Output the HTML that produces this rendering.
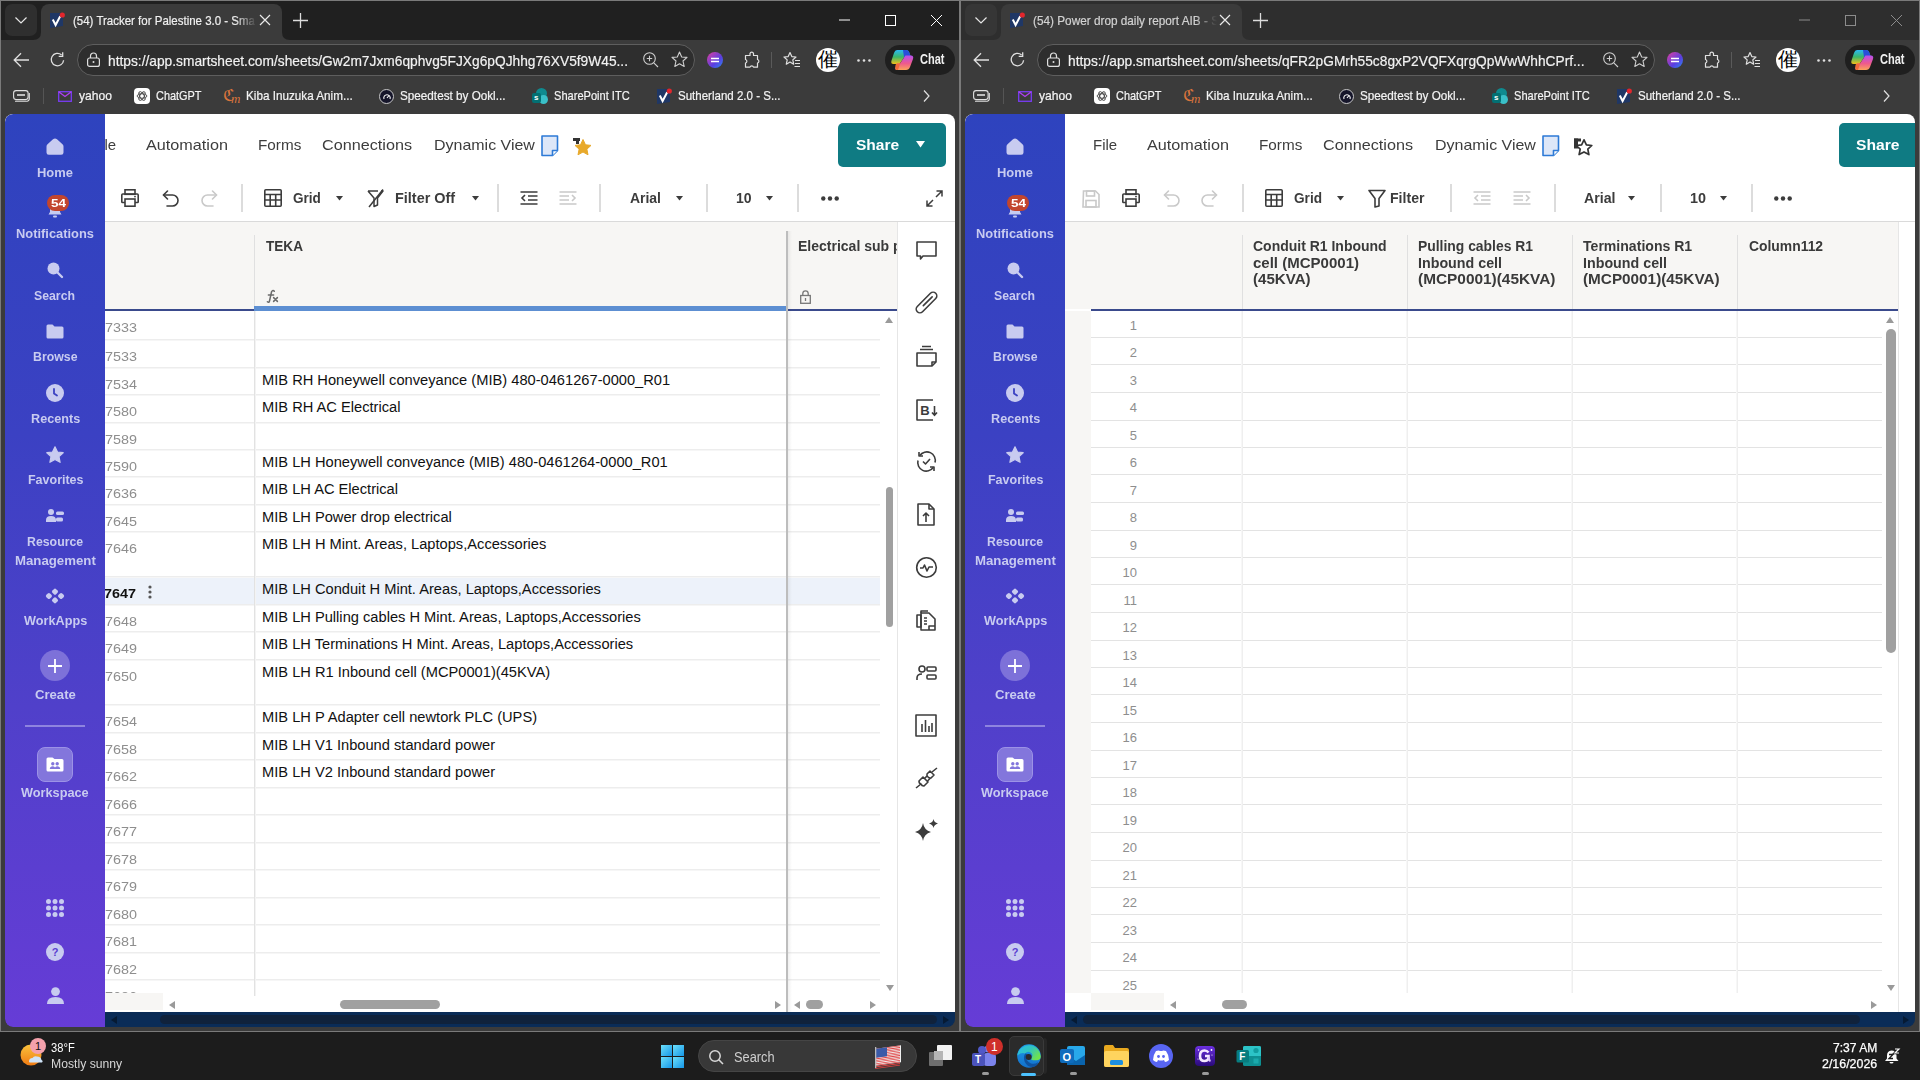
<!DOCTYPE html><html><head><meta charset="utf-8"><title>s</title><style>
*{box-sizing:border-box;margin:0;padding:0}
html,body{width:1920px;height:1080px;overflow:hidden;background:#1c1c1c;font-family:"Liberation Sans",sans-serif}
.abs{position:absolute}
.t{position:absolute;white-space:nowrap;line-height:1;transform-origin:0 0}
svg{position:absolute;overflow:visible}
.clip{position:absolute;overflow:hidden}
</style></head><body>
<div class="abs" style="left:0px;top:0px;width:1920px;height:1032px;background:#7a7a7a;"></div>
<div class="abs" style="left:1px;top:1px;width:958px;height:1030px;background:#3b3b3b;"></div>
<div class="abs" style="left:1px;top:1px;width:958px;height:39px;background:#202020;"></div>
<div class="abs" style="left:5px;top:4px;width:32px;height:32px;background:#2f2f2f;border-radius:7px"></div>
<svg style="left:15px;top:17px" width="12" height="7" viewBox="0 0 12 7"><path d="M0.5 0.5 L6 6 L11.5 0.5" fill="none" stroke="#e8e8e8" stroke-width="1.2"/></svg>
<div class="abs" style="left:41px;top:4px;width:241px;height:36px;background:#3b3b3b;border-radius:8px 8px 0 0"></div>
<svg style="left:33px;top:32px" width="8" height="8" viewBox="0 0 8 8"><path d="M0 8 Q8 8 8 0 L8 8Z" fill="#3b3b3b"/></svg>
<svg style="left:282px;top:32px" width="8" height="8" viewBox="0 0 8 8"><path d="M8 8 Q0 8 0 0 L0 8Z" fill="#3b3b3b"/></svg>
<svg style="left:50px;top:12px" width="15" height="17" viewBox="0 0 15 17"><path d="M0 1H13V14L0 16Z" fill="#1f3766"/><path d="M2.8 7.5L5.6 13L10.2 4.2" fill="none" stroke="#fff" stroke-width="2"/><circle cx="12.3" cy="3" r="2.6" fill="#e3262c"/></svg>
<div class="clip" style="left:73px;top:8px;width:184px;height:24px;-webkit-mask-image:linear-gradient(90deg,#000 88%,transparent 100%)">
<div class="t" style="left:0px;top:6.00px;font-size:13px;color:#f0f0f0;font-weight:normal;font-family:'Liberation Sans',sans-serif;font-style:normal;transform:scaleX(0.8838);-webkit-text-stroke:0.2px #f0f0f0;">(54) Tracker for Palestine 3.0 - Sma</div>
</div>
<svg style="left:260px;top:15px" width="10" height="10" viewBox="0 0 10 10"><path d="M0 0L10 10M10 0L0 10" stroke="#e8e8e8" stroke-width="1.2"/></svg>
<svg style="left:293px;top:13px" width="15" height="15" viewBox="0 0 15 15"><path d="M7.5 0V15M0 7.5H15" stroke="#dcdcdc" stroke-width="1.3"/></svg>
<svg style="left:839px;top:19px" width="11" height="2" viewBox="0 0 11 2"><path d="M0 1H11" stroke="#ffffff" stroke-width="1"/></svg>
<svg style="left:885px;top:15px" width="11" height="11" viewBox="0 0 11 11"><rect x="0.5" y="0.5" width="10" height="10" fill="none" stroke="#ffffff" stroke-width="1"/></svg>
<svg style="left:931px;top:15px" width="11" height="11" viewBox="0 0 11 11"><path d="M0 0L11 11M11 0L0 11" stroke="#ffffff" stroke-width="1"/></svg>
<svg style="left:13px;top:52px" width="17" height="16" viewBox="0 0 17 16"><path d="M16 8H1.2M8 1.2L1.2 8L8 14.8" fill="none" stroke="#e0e0e0" stroke-width="1.3"/></svg>
<svg style="left:50px;top:52px" width="15" height="15" viewBox="0 0 15 15"><path d="M13.6 8.2A6.2 6.2 0 1 1 11.6 3" fill="none" stroke="#e0e0e0" stroke-width="1.3"/><path d="M12.7 0.3V4.3H8.7" fill="none" stroke="#e0e0e0" stroke-width="1.3"/></svg>
<div class="abs" style="left:77px;top:44px;width:618px;height:32px;background:#2e2e2e;border-radius:16px;border:1px solid #5e5e5e"></div>
<svg style="left:87px;top:52px" width="13" height="15" viewBox="0 0 13 15"><rect x="0.6" y="6" width="11.8" height="8.4" rx="2" fill="none" stroke="#e0e0e0" stroke-width="1.2"/><path d="M3.5 6V4A3 3 0 0 1 9.5 4V6" fill="none" stroke="#e0e0e0" stroke-width="1.2"/><circle cx="6.5" cy="10" r="1" fill="#e0e0e0"/></svg>
<div class="t" style="left:108px;top:52.80px;font-size:15px;color:#f2f2f2;font-weight:normal;font-family:'Liberation Sans',sans-serif;font-style:normal;transform:scaleX(0.9172);-webkit-text-stroke:0.2px #f2f2f2;">https://app.smartsheet.com/sheets/Gw2m7Jxm6qphvg5FJXg6pQJhhg76XV5f9W45...</div>
<svg style="left:643px;top:52px" width="16" height="16" viewBox="0 0 16 16"><circle cx="6.5" cy="6.5" r="5.8" fill="none" stroke="#cfcfcf" stroke-width="1.1"/><path d="M10.8 10.8L15 15M6.5 3.8V9.2M3.8 6.5H9.2" stroke="#cfcfcf" stroke-width="1.1"/></svg>
<svg style="left:671px;top:51px" width="17" height="17" viewBox="0 0 17 17"><path d="M8.5 1L10.7 6L16 6.4L12 10L13.2 15.5L8.5 12.7L3.8 15.5L5 10L1 6.4L6.3 6Z" fill="none" stroke="#cfcfcf" stroke-width="1.1" stroke-linejoin="round"/></svg>
<div class="abs" style="left:707px;top:52px;width:16px;height:16px;background:linear-gradient(135deg,#e040a0,#5a3ee0 60%,#2a8af0);border-radius:50%"></div>
<svg style="left:710px;top:56px" width="10" height="8" viewBox="0 0 10 8"><path d="M1 2.5H9M1 5.5H9" stroke="#fff" stroke-width="1.5"/></svg>
<svg style="left:744px;top:52px" width="16" height="17" viewBox="0 0 16 17"><path d="M6 1.5A1.8 1.8 0 0 1 9.5 1.5V3.5H13.5V7.5A1.8 1.8 0 0 1 13.5 11V15.2H9.5A1.8 1.8 0 0 0 6 15.2H1.5V11A1.8 1.8 0 0 0 1.5 7.5V3.5H6Z" fill="none" stroke="#e0e0e0" stroke-width="1.2" stroke-linejoin="round"/></svg>
<div class="abs" style="left:771px;top:52px;width:1px;height:16px;background:#5a5a5a;"></div>
<svg style="left:783px;top:51px" width="18" height="17" viewBox="0 0 18 17"><path d="M7 1.5L8.8 5.6L13 6L9.8 8.9L10.7 13.2L7 11L3.3 13.2L4.2 8.9L1 6L5.2 5.6Z" fill="none" stroke="#e0e0e0" stroke-width="1.2" stroke-linejoin="round"/><path d="M12 9.5H17M12 12.5H17M11.5 15.5H17" stroke="#e0e0e0" stroke-width="1.2"/></svg>
<div class="abs" style="left:816px;top:48px;width:24px;height:24px;background:#fff;border-radius:50%"></div>
<div class="t" style="left:818px;top:49.18px;font-size:20px;color:#000;font-weight:normal;font-family:'Liberation Serif',serif;font-style:normal;">催</div>
<svg style="left:857px;top:59px" width="14" height="3" viewBox="0 0 14 3"><circle cx="1.5" cy="1.5" r="1.3" fill="#e0e0e0"/><circle cx="7" cy="1.5" r="1.3" fill="#e0e0e0"/><circle cx="12.5" cy="1.5" r="1.3" fill="#e0e0e0"/></svg>
<div class="abs" style="left:885px;top:45px;width:70px;height:30px;background:#1f1f1f;border-radius:15px"></div>
<svg style="left:889px;top:48px" width="26" height="24" viewBox="0 0 26 24"><defs><linearGradient id="ca0" x1="0" y1="0" x2="0" y2="1"><stop offset="0" stop-color="#2ab8f5"/><stop offset="0.5" stop-color="#3bb56a"/><stop offset="1" stop-color="#f2c21b"/></linearGradient><linearGradient id="cb0" x1="0" y1="0" x2="0" y2="1"><stop offset="0" stop-color="#b84ff0"/><stop offset="0.55" stop-color="#ee5a8c"/><stop offset="1" stop-color="#fba35a"/></linearGradient></defs><path d="M8 2H17Q19.5 2 20.5 5L22 9.5H15L10.5 16H4.5Q1.5 16 2.5 12.5L5 5Q6 2 8 2Z" fill="url(#ca0)"/><path d="M14 2H17Q19.5 2 20.5 5L22 9.5H15Z" fill="#2a4fd8"/><path d="M16.5 7.5H22Q25 7.5 24 11L21 19Q20 22 17 22H8Q5.5 22 6.5 19L8 15.5H11Z" fill="url(#cb0)"/><path d="M6.5 19Q6 16 8 15.5H11L9 22H8Q6 22 6.5 19Z" fill="#f06a3a"/></svg>
<div class="t" style="left:920px;top:52.15px;font-size:14px;color:#f0f0f0;font-weight:bold;font-family:'Liberation Sans',sans-serif;font-style:normal;transform:scaleX(0.7871);">Chat</div>
<svg style="left:13px;top:90px" width="17" height="12" viewBox="0 0 17 12"><rect x="0.6" y="0.6" width="14.5" height="9" rx="2.5" fill="none" stroke="#e0e0e0" stroke-width="1.1"/><path d="M2 11.2H14A2.5 2.5 0 0 0 16.3 8.5V3" fill="none" stroke="#e0e0e0" stroke-width="1.1"/><path d="M4 5H12" stroke="#e0e0e0" stroke-width="1.6"/></svg>
<div class="abs" style="left:43px;top:88px;width:1px;height:16px;background:#555;"></div>
<svg style="left:58px;top:91px" width="14" height="11" viewBox="0 0 14 11"><rect x="0.7" y="0.7" width="12.6" height="9.6" fill="none" stroke="#7a3cf5" stroke-width="1.3"/><path d="M0.7 0.7L7 5.5L13.3 0.7" fill="none" stroke="#b040f0" stroke-width="1.3"/></svg>
<div class="t" style="left:79px;top:89.00px;font-size:13px;color:#f4f4f4;font-weight:normal;font-family:'Liberation Sans',sans-serif;font-style:normal;transform:scaleX(0.9316);-webkit-text-stroke:0.2px #f4f4f4;">yahoo</div>
<div class="abs" style="left:134px;top:88px;width:16px;height:16px;background:#fff;border-radius:4px"></div>
<svg style="left:136px;top:90px" width="12" height="12" viewBox="0 0 12 12"><g fill="none" stroke="#444" stroke-width="0.9"><ellipse cx="6" cy="6" rx="4.8" ry="2.2"/><ellipse cx="6" cy="6" rx="4.8" ry="2.2" transform="rotate(60 6 6)"/><ellipse cx="6" cy="6" rx="4.8" ry="2.2" transform="rotate(120 6 6)"/></g></svg>
<div class="t" style="left:156px;top:89.00px;font-size:13px;color:#f4f4f4;font-weight:normal;font-family:'Liberation Sans',sans-serif;font-style:normal;transform:scaleX(0.8397);-webkit-text-stroke:0.2px #f4f4f4;">ChatGPT</div>
<div class="t" style="left:223px;top:86.85px;font-size:17px;color:#d9743c;font-weight:normal;font-family:'Liberation Serif',serif;font-style:normal;">ℭ</div>
<div class="t" style="left:231px;top:92.42px;font-size:13px;color:#d9743c;font-weight:normal;font-family:'Liberation Serif',serif;font-style:italic;">m</div>
<div class="t" style="left:246px;top:89.00px;font-size:13px;color:#f4f4f4;font-weight:normal;font-family:'Liberation Sans',sans-serif;font-style:normal;transform:scaleX(0.9003);-webkit-text-stroke:0.2px #f4f4f4;">Kiba Inuzuka Anim...</div>
<div class="abs" style="left:379px;top:89px;width:15px;height:15px;background:#15152a;border-radius:50%;border:1px solid #c8c8c8"></div>
<svg style="left:383px;top:93px" width="8" height="7" viewBox="0 0 8 7"><path d="M1 6A3.2 3.2 0 1 1 7 6" fill="none" stroke="#fff" stroke-width="1.1"/><path d="M4 5L6 2.5" stroke="#fff" stroke-width="1.1"/></svg>
<div class="t" style="left:400px;top:89.00px;font-size:13px;color:#f4f4f4;font-weight:normal;font-family:'Liberation Sans',sans-serif;font-style:normal;transform:scaleX(0.9011);-webkit-text-stroke:0.2px #f4f4f4;">Speedtest by Ookl...</div>
<div class="abs" style="left:536px;top:88px;width:11px;height:11px;background:#0f8a8f;border-radius:50%"></div>
<div class="abs" style="left:539px;top:95px;width:9px;height:9px;background:#3ac0c8;border-radius:50%"></div>
<div class="abs" style="left:532px;top:93px;width:9px;height:10px;background:#037073;border-radius:2px"></div>
<div class="t" style="left:534px;top:94.23px;font-size:8px;color:#fff;font-weight:bold;font-family:'Liberation Sans',sans-serif;font-style:normal;">s</div>
<div class="t" style="left:554px;top:89.00px;font-size:13px;color:#f4f4f4;font-weight:normal;font-family:'Liberation Sans',sans-serif;font-style:normal;transform:scaleX(0.8518);-webkit-text-stroke:0.2px #f4f4f4;">SharePoint ITC</div>
<svg style="left:657px;top:88px" width="15" height="17" viewBox="0 0 15 17"><path d="M0 1H13V14L0 16Z" fill="#1f3766"/><path d="M2.8 7.5L5.6 13L10.2 4.2" fill="none" stroke="#fff" stroke-width="2"/><circle cx="12.3" cy="3" r="2.6" fill="#e3262c"/></svg>
<div class="t" style="left:678px;top:89.00px;font-size:13px;color:#f4f4f4;font-weight:normal;font-family:'Liberation Sans',sans-serif;font-style:normal;transform:scaleX(0.8865);-webkit-text-stroke:0.2px #f4f4f4;">Sutherland 2.0 - S...</div>
<svg style="left:923px;top:90px" width="7" height="12" viewBox="0 0 7 12"><path d="M1 0.5L6 6L1 11.5" fill="none" stroke="#e0e0e0" stroke-width="1.2"/></svg>
<div class="abs" style="left:961px;top:1px;width:958px;height:1030px;background:#3b3b3b;"></div>
<div class="abs" style="left:961px;top:1px;width:958px;height:39px;background:#2e2e2e;"></div>
<div class="abs" style="left:965px;top:4px;width:32px;height:32px;background:#363636;border-radius:7px"></div>
<svg style="left:975px;top:17px" width="12" height="7" viewBox="0 0 12 7"><path d="M0.5 0.5 L6 6 L11.5 0.5" fill="none" stroke="#e8e8e8" stroke-width="1.2"/></svg>
<div class="abs" style="left:1001px;top:4px;width:241px;height:36px;background:#3b3b3b;border-radius:8px 8px 0 0"></div>
<svg style="left:993px;top:32px" width="8" height="8" viewBox="0 0 8 8"><path d="M0 8 Q8 8 8 0 L8 8Z" fill="#3b3b3b"/></svg>
<svg style="left:1242px;top:32px" width="8" height="8" viewBox="0 0 8 8"><path d="M8 8 Q0 8 0 0 L0 8Z" fill="#3b3b3b"/></svg>
<svg style="left:1010px;top:12px" width="15" height="17" viewBox="0 0 15 17"><path d="M0 1H13V14L0 16Z" fill="#1f3766"/><path d="M2.8 7.5L5.6 13L10.2 4.2" fill="none" stroke="#fff" stroke-width="2"/><circle cx="12.3" cy="3" r="2.6" fill="#e3262c"/></svg>
<div class="clip" style="left:1033px;top:8px;width:184px;height:24px;-webkit-mask-image:linear-gradient(90deg,#000 88%,transparent 100%)">
<div class="t" style="left:0px;top:6.00px;font-size:13px;color:#d2d2d2;font-weight:normal;font-family:'Liberation Sans',sans-serif;font-style:normal;transform:scaleX(0.9064);-webkit-text-stroke:0.2px #d2d2d2;">(54) Power drop daily report AIB - S</div>
</div>
<svg style="left:1220px;top:15px" width="10" height="10" viewBox="0 0 10 10"><path d="M0 0L10 10M10 0L0 10" stroke="#e8e8e8" stroke-width="1.2"/></svg>
<svg style="left:1253px;top:13px" width="15" height="15" viewBox="0 0 15 15"><path d="M7.5 0V15M0 7.5H15" stroke="#dcdcdc" stroke-width="1.3"/></svg>
<svg style="left:1799px;top:19px" width="11" height="2" viewBox="0 0 11 2"><path d="M0 1H11" stroke="#8c8c8c" stroke-width="1"/></svg>
<svg style="left:1845px;top:15px" width="11" height="11" viewBox="0 0 11 11"><rect x="0.5" y="0.5" width="10" height="10" fill="none" stroke="#8c8c8c" stroke-width="1"/></svg>
<svg style="left:1891px;top:15px" width="11" height="11" viewBox="0 0 11 11"><path d="M0 0L11 11M11 0L0 11" stroke="#8c8c8c" stroke-width="1"/></svg>
<svg style="left:973px;top:52px" width="17" height="16" viewBox="0 0 17 16"><path d="M16 8H1.2M8 1.2L1.2 8L8 14.8" fill="none" stroke="#e0e0e0" stroke-width="1.3"/></svg>
<svg style="left:1010px;top:52px" width="15" height="15" viewBox="0 0 15 15"><path d="M13.6 8.2A6.2 6.2 0 1 1 11.6 3" fill="none" stroke="#e0e0e0" stroke-width="1.3"/><path d="M12.7 0.3V4.3H8.7" fill="none" stroke="#e0e0e0" stroke-width="1.3"/></svg>
<div class="abs" style="left:1037px;top:44px;width:618px;height:32px;background:#2e2e2e;border-radius:16px;border:1px solid #5e5e5e"></div>
<svg style="left:1047px;top:52px" width="13" height="15" viewBox="0 0 13 15"><rect x="0.6" y="6" width="11.8" height="8.4" rx="2" fill="none" stroke="#e0e0e0" stroke-width="1.2"/><path d="M3.5 6V4A3 3 0 0 1 9.5 4V6" fill="none" stroke="#e0e0e0" stroke-width="1.2"/><circle cx="6.5" cy="10" r="1" fill="#e0e0e0"/></svg>
<div class="t" style="left:1068px;top:52.80px;font-size:15px;color:#f2f2f2;font-weight:normal;font-family:'Liberation Sans',sans-serif;font-style:normal;transform:scaleX(0.9165);-webkit-text-stroke:0.2px #f2f2f2;">https://app.smartsheet.com/sheets/qFR2pGMrh55c8gxP2VQFXqrgQpWwWhhCPrf...</div>
<svg style="left:1603px;top:52px" width="16" height="16" viewBox="0 0 16 16"><circle cx="6.5" cy="6.5" r="5.8" fill="none" stroke="#cfcfcf" stroke-width="1.1"/><path d="M10.8 10.8L15 15M6.5 3.8V9.2M3.8 6.5H9.2" stroke="#cfcfcf" stroke-width="1.1"/></svg>
<svg style="left:1631px;top:51px" width="17" height="17" viewBox="0 0 17 17"><path d="M8.5 1L10.7 6L16 6.4L12 10L13.2 15.5L8.5 12.7L3.8 15.5L5 10L1 6.4L6.3 6Z" fill="none" stroke="#cfcfcf" stroke-width="1.1" stroke-linejoin="round"/></svg>
<div class="abs" style="left:1667px;top:52px;width:16px;height:16px;background:linear-gradient(135deg,#e040a0,#5a3ee0 60%,#2a8af0);border-radius:50%"></div>
<svg style="left:1670px;top:56px" width="10" height="8" viewBox="0 0 10 8"><path d="M1 2.5H9M1 5.5H9" stroke="#fff" stroke-width="1.5"/></svg>
<svg style="left:1704px;top:52px" width="16" height="17" viewBox="0 0 16 17"><path d="M6 1.5A1.8 1.8 0 0 1 9.5 1.5V3.5H13.5V7.5A1.8 1.8 0 0 1 13.5 11V15.2H9.5A1.8 1.8 0 0 0 6 15.2H1.5V11A1.8 1.8 0 0 0 1.5 7.5V3.5H6Z" fill="none" stroke="#e0e0e0" stroke-width="1.2" stroke-linejoin="round"/></svg>
<div class="abs" style="left:1731px;top:52px;width:1px;height:16px;background:#5a5a5a;"></div>
<svg style="left:1743px;top:51px" width="18" height="17" viewBox="0 0 18 17"><path d="M7 1.5L8.8 5.6L13 6L9.8 8.9L10.7 13.2L7 11L3.3 13.2L4.2 8.9L1 6L5.2 5.6Z" fill="none" stroke="#e0e0e0" stroke-width="1.2" stroke-linejoin="round"/><path d="M12 9.5H17M12 12.5H17M11.5 15.5H17" stroke="#e0e0e0" stroke-width="1.2"/></svg>
<div class="abs" style="left:1776px;top:48px;width:24px;height:24px;background:#fff;border-radius:50%"></div>
<div class="t" style="left:1778px;top:49.18px;font-size:20px;color:#000;font-weight:normal;font-family:'Liberation Serif',serif;font-style:normal;">催</div>
<svg style="left:1817px;top:59px" width="14" height="3" viewBox="0 0 14 3"><circle cx="1.5" cy="1.5" r="1.3" fill="#e0e0e0"/><circle cx="7" cy="1.5" r="1.3" fill="#e0e0e0"/><circle cx="12.5" cy="1.5" r="1.3" fill="#e0e0e0"/></svg>
<div class="abs" style="left:1845px;top:45px;width:70px;height:30px;background:#1f1f1f;border-radius:15px"></div>
<svg style="left:1849px;top:48px" width="26" height="24" viewBox="0 0 26 24"><defs><linearGradient id="ca960" x1="0" y1="0" x2="0" y2="1"><stop offset="0" stop-color="#2ab8f5"/><stop offset="0.5" stop-color="#3bb56a"/><stop offset="1" stop-color="#f2c21b"/></linearGradient><linearGradient id="cb960" x1="0" y1="0" x2="0" y2="1"><stop offset="0" stop-color="#b84ff0"/><stop offset="0.55" stop-color="#ee5a8c"/><stop offset="1" stop-color="#fba35a"/></linearGradient></defs><path d="M8 2H17Q19.5 2 20.5 5L22 9.5H15L10.5 16H4.5Q1.5 16 2.5 12.5L5 5Q6 2 8 2Z" fill="url(#ca960)"/><path d="M14 2H17Q19.5 2 20.5 5L22 9.5H15Z" fill="#2a4fd8"/><path d="M16.5 7.5H22Q25 7.5 24 11L21 19Q20 22 17 22H8Q5.5 22 6.5 19L8 15.5H11Z" fill="url(#cb960)"/><path d="M6.5 19Q6 16 8 15.5H11L9 22H8Q6 22 6.5 19Z" fill="#f06a3a"/></svg>
<div class="t" style="left:1880px;top:52.15px;font-size:14px;color:#f0f0f0;font-weight:bold;font-family:'Liberation Sans',sans-serif;font-style:normal;transform:scaleX(0.7871);">Chat</div>
<svg style="left:973px;top:90px" width="17" height="12" viewBox="0 0 17 12"><rect x="0.6" y="0.6" width="14.5" height="9" rx="2.5" fill="none" stroke="#e0e0e0" stroke-width="1.1"/><path d="M2 11.2H14A2.5 2.5 0 0 0 16.3 8.5V3" fill="none" stroke="#e0e0e0" stroke-width="1.1"/><path d="M4 5H12" stroke="#e0e0e0" stroke-width="1.6"/></svg>
<div class="abs" style="left:1003px;top:88px;width:1px;height:16px;background:#555;"></div>
<svg style="left:1018px;top:91px" width="14" height="11" viewBox="0 0 14 11"><rect x="0.7" y="0.7" width="12.6" height="9.6" fill="none" stroke="#7a3cf5" stroke-width="1.3"/><path d="M0.7 0.7L7 5.5L13.3 0.7" fill="none" stroke="#b040f0" stroke-width="1.3"/></svg>
<div class="t" style="left:1039px;top:89.00px;font-size:13px;color:#f4f4f4;font-weight:normal;font-family:'Liberation Sans',sans-serif;font-style:normal;transform:scaleX(0.9316);-webkit-text-stroke:0.2px #f4f4f4;">yahoo</div>
<div class="abs" style="left:1094px;top:88px;width:16px;height:16px;background:#fff;border-radius:4px"></div>
<svg style="left:1096px;top:90px" width="12" height="12" viewBox="0 0 12 12"><g fill="none" stroke="#444" stroke-width="0.9"><ellipse cx="6" cy="6" rx="4.8" ry="2.2"/><ellipse cx="6" cy="6" rx="4.8" ry="2.2" transform="rotate(60 6 6)"/><ellipse cx="6" cy="6" rx="4.8" ry="2.2" transform="rotate(120 6 6)"/></g></svg>
<div class="t" style="left:1116px;top:89.00px;font-size:13px;color:#f4f4f4;font-weight:normal;font-family:'Liberation Sans',sans-serif;font-style:normal;transform:scaleX(0.8397);-webkit-text-stroke:0.2px #f4f4f4;">ChatGPT</div>
<div class="t" style="left:1183px;top:86.85px;font-size:17px;color:#d9743c;font-weight:normal;font-family:'Liberation Serif',serif;font-style:normal;">ℭ</div>
<div class="t" style="left:1191px;top:92.42px;font-size:13px;color:#d9743c;font-weight:normal;font-family:'Liberation Serif',serif;font-style:italic;">m</div>
<div class="t" style="left:1206px;top:89.00px;font-size:13px;color:#f4f4f4;font-weight:normal;font-family:'Liberation Sans',sans-serif;font-style:normal;transform:scaleX(0.9003);-webkit-text-stroke:0.2px #f4f4f4;">Kiba Inuzuka Anim...</div>
<div class="abs" style="left:1339px;top:89px;width:15px;height:15px;background:#15152a;border-radius:50%;border:1px solid #c8c8c8"></div>
<svg style="left:1343px;top:93px" width="8" height="7" viewBox="0 0 8 7"><path d="M1 6A3.2 3.2 0 1 1 7 6" fill="none" stroke="#fff" stroke-width="1.1"/><path d="M4 5L6 2.5" stroke="#fff" stroke-width="1.1"/></svg>
<div class="t" style="left:1360px;top:89.00px;font-size:13px;color:#f4f4f4;font-weight:normal;font-family:'Liberation Sans',sans-serif;font-style:normal;transform:scaleX(0.9011);-webkit-text-stroke:0.2px #f4f4f4;">Speedtest by Ookl...</div>
<div class="abs" style="left:1496px;top:88px;width:11px;height:11px;background:#0f8a8f;border-radius:50%"></div>
<div class="abs" style="left:1499px;top:95px;width:9px;height:9px;background:#3ac0c8;border-radius:50%"></div>
<div class="abs" style="left:1492px;top:93px;width:9px;height:10px;background:#037073;border-radius:2px"></div>
<div class="t" style="left:1494px;top:94.23px;font-size:8px;color:#fff;font-weight:bold;font-family:'Liberation Sans',sans-serif;font-style:normal;">s</div>
<div class="t" style="left:1514px;top:89.00px;font-size:13px;color:#f4f4f4;font-weight:normal;font-family:'Liberation Sans',sans-serif;font-style:normal;transform:scaleX(0.8518);-webkit-text-stroke:0.2px #f4f4f4;">SharePoint ITC</div>
<svg style="left:1617px;top:88px" width="15" height="17" viewBox="0 0 15 17"><path d="M0 1H13V14L0 16Z" fill="#1f3766"/><path d="M2.8 7.5L5.6 13L10.2 4.2" fill="none" stroke="#fff" stroke-width="2"/><circle cx="12.3" cy="3" r="2.6" fill="#e3262c"/></svg>
<div class="t" style="left:1638px;top:89.00px;font-size:13px;color:#f4f4f4;font-weight:normal;font-family:'Liberation Sans',sans-serif;font-style:normal;transform:scaleX(0.8865);-webkit-text-stroke:0.2px #f4f4f4;">Sutherland 2.0 - S...</div>
<svg style="left:1883px;top:90px" width="7" height="12" viewBox="0 0 7 12"><path d="M1 0.5L6 6L1 11.5" fill="none" stroke="#e0e0e0" stroke-width="1.2"/></svg>
<div class="clip" style="left:0;top:0;width:1920px;height:1080px;clip-path:inset(114px 965px 53px 5px round 8px)">
<div class="abs" style="left:5px;top:114px;width:950px;height:107px;background:#ffffff;"></div>
<div class="abs" style="left:5px;top:221px;width:950px;height:1px;background:#dadada;"></div>
<div class="t" style="left:92.09999999999991px;top:137.10px;font-size:15px;color:#3d3d3d;font-weight:normal;font-family:'Liberation Sans',sans-serif;font-style:normal;transform:scaleX(0.9970);">File</div>
<div class="t" style="left:146px;top:137.10px;font-size:15px;color:#3d3d3d;font-weight:normal;font-family:'Liberation Sans',sans-serif;font-style:normal;transform:scaleX(1.0805);">Automation</div>
<div class="t" style="left:257.70000000000005px;top:137.10px;font-size:15px;color:#3d3d3d;font-weight:normal;font-family:'Liberation Sans',sans-serif;font-style:normal;transform:scaleX(1.0188);">Forms</div>
<div class="t" style="left:322px;top:137.10px;font-size:15px;color:#3d3d3d;font-weight:normal;font-family:'Liberation Sans',sans-serif;font-style:normal;transform:scaleX(1.0793);">Connections</div>
<div class="t" style="left:433.79999999999995px;top:137.10px;font-size:15px;color:#3d3d3d;font-weight:normal;font-family:'Liberation Sans',sans-serif;font-style:normal;transform:scaleX(1.0647);">Dynamic View</div>
<svg style="left:540.8px;top:135px" width="18" height="22" viewBox="0 0 18 22"><path d="M1 1H16.5V15.5L11.5 20.5H1Z" fill="#dde7f8" stroke="#2d7ad6" stroke-width="1.6" stroke-linejoin="round"/><path d="M16.5 15.5H11.5V20.5" fill="#fff" stroke="#2d7ad6" stroke-width="1.6" stroke-linejoin="round"/></svg>
<svg style="left:573px;top:138px" width="19" height="18" viewBox="0 0 19 18"><path d="M10 1.5L12.5 6.8L18 7.4L13.9 11.2L15 16.8L10 14L5 16.8L6.1 11.2L2 7.4L7.5 6.8Z" fill="#e8a92b" stroke="#e8a92b" stroke-width="1" stroke-linejoin="round"/><rect x="0" y="0" width="7" height="3" fill="#333"/><rect x="3" y="0" width="3" height="6" fill="#333"/></svg>
<div class="abs" style="left:838px;top:123px;width:108px;height:44px;background:#0f7b83;border-radius:5px"></div>
<div class="t" style="left:855.5px;top:137.30px;font-size:15px;color:#fff;font-weight:bold;font-family:'Liberation Sans',sans-serif;font-style:normal;transform:scaleX(1.0359);">Share</div>
<svg style="left:916px;top:141px" width="9" height="7" viewBox="0 0 9 7"><path d="M0 0H9L4.5 6.5Z" fill="#fff"/></svg>
<svg style="left:121px;top:189px" width="18" height="18" viewBox="0 0 18 18"><g fill="none" stroke="#3c3c3c" stroke-width="1.6"><rect x="4" y="0.8" width="10" height="4.5"/><path d="M4 13.5H1.5Q0.8 13.5 0.8 12.8V6Q0.8 5 1.8 5H16.2Q17.2 5 17.2 6V12.8Q17.2 13.5 16.5 13.5H14"/><rect x="4" y="10" width="10" height="7.2"/></g><circle cx="14" cy="7.6" r="0.9" fill="#3c3c3c"/></svg>
<svg style="left:162px;top:189px" width="17" height="18" viewBox="0 0 17 18"><g fill="none" stroke="#3c3c3c" stroke-width="1.6" stroke-linecap="round"><path d="M2 6H10.5A5.5 5.5 0 0 1 10.5 17H5"/><path d="M5.5 2L1.5 6L5.5 10"/></g></svg>
<svg style="left:200.5px;top:189px" width="17" height="18" viewBox="0 0 17 18"><g fill="none" stroke="#c9c9c9" stroke-width="1.6" stroke-linecap="round"><path d="M15 6H6.5A5.5 5.5 0 0 0 6.5 17H12"/><path d="M11.5 2L15.5 6L11.5 10"/></g></svg>
<div class="abs" style="left:240.5px;top:184px;width:2px;height:28px;background:#dcdcdc;"></div>
<svg style="left:264px;top:189px" width="18" height="18" viewBox="0 0 18 18"><g fill="none" stroke="#3c3c3c" stroke-width="1.6"><rect x="0.8" y="0.8" width="16.4" height="16.4" rx="1"/><path d="M0.8 5.5H17.2M0.8 11H17.2M6.2 5.5V17.2M11.7 5.5V17.2"/></g></svg>
<div class="t" style="left:293.4px;top:190.30px;font-size:15px;color:#3c3c3c;font-weight:bold;font-family:'Liberation Sans',sans-serif;font-style:normal;transform:scaleX(0.9046);">Grid</div>
<svg style="left:335.5px;top:195.5px" width="7" height="5" viewBox="0 0 7 5"><path d="M0 0H7L3.5 4.6Z" fill="#3c3c3c"/></svg>
<svg style="left:366.5px;top:189px" width="17" height="19" viewBox="0 0 17 19"><g fill="none" stroke="#3c3c3c" stroke-width="1.5" stroke-linejoin="round"><path d="M1 2H11M14 2H16L10.5 9V16L7 17.5V9L1 2"/><path d="M16 0.5L2 18"/></g></svg>
<div class="t" style="left:394.5px;top:190.30px;font-size:15px;color:#3c3c3c;font-weight:bold;font-family:'Liberation Sans',sans-serif;font-style:normal;transform:scaleX(0.9616);">Filter Off</div>
<svg style="left:471.5px;top:195.5px" width="7" height="5" viewBox="0 0 7 5"><path d="M0 0H7L3.5 4.6Z" fill="#3c3c3c"/></svg>
<div class="abs" style="left:496.5px;top:184px;width:2px;height:28px;background:#dcdcdc;"></div>
<svg style="left:520px;top:190.5px" width="18" height="14" viewBox="0 0 18 14"><g fill="none" stroke="#3c3c3c" stroke-width="1.6"><path d="M0.5 1H17.5M0.5 13H17.5M8 5H17.5M8 9H17.5"/><path d="M5 4L2 7L5 10"/></g></svg>
<svg style="left:559px;top:190.5px" width="18" height="14" viewBox="0 0 18 14"><g fill="none" stroke="#c9c9c9" stroke-width="1.6"><path d="M0.5 1H17.5M0.5 13H17.5M0.5 5H10M0.5 9H10"/><path d="M13 4L16 7L13 10"/></g></svg>
<div class="abs" style="left:599px;top:184px;width:2px;height:28px;background:#dcdcdc;"></div>
<div class="t" style="left:630px;top:190.30px;font-size:15px;color:#3c3c3c;font-weight:bold;font-family:'Liberation Sans',sans-serif;font-style:normal;transform:scaleX(0.9293);">Arial</div>
<svg style="left:675.5px;top:195.5px" width="7" height="5" viewBox="0 0 7 5"><path d="M0 0H7L3.5 4.6Z" fill="#3c3c3c"/></svg>
<div class="abs" style="left:706px;top:184px;width:2px;height:28px;background:#dcdcdc;"></div>
<div class="t" style="left:736.4px;top:190.30px;font-size:15px;color:#3c3c3c;font-weight:bold;font-family:'Liberation Sans',sans-serif;font-style:normal;transform:scaleX(0.9348);">10</div>
<svg style="left:766.3px;top:195.5px" width="7" height="5" viewBox="0 0 7 5"><path d="M0 0H7L3.5 4.6Z" fill="#3c3c3c"/></svg>
<div class="abs" style="left:797px;top:184px;width:2px;height:28px;background:#dcdcdc;"></div>
<svg style="left:821px;top:195.5px" width="18" height="5" viewBox="0 0 18 5"><circle cx="2.3" cy="2.5" r="2.2" fill="#3c3c3c"/><circle cx="9" cy="2.5" r="2.2" fill="#3c3c3c"/><circle cx="15.7" cy="2.5" r="2.2" fill="#3c3c3c"/></svg>
<svg style="left:925.5px;top:189.5px" width="17" height="17" viewBox="0 0 17 17"><g fill="none" stroke="#3c3c3c" stroke-width="1.5"><path d="M10.5 1H16V6.5M16 1L10 7M6.5 16H1V10.5M1 16L7 10"/></g></svg>
<div class="abs" style="left:105px;top:222px;width:792px;height:790px;background:#fff;"></div>
<div class="abs" style="left:105px;top:222px;width:792px;height:87px;background:#f7f6f4;"></div>
<div class="abs" style="left:254px;top:235px;width:1px;height:74px;background:#e0e0e0;"></div>
<div class="t" style="left:265.5px;top:239.35px;font-size:14px;color:#3a3a3a;font-weight:bold;font-family:'Liberation Sans',sans-serif;font-style:normal;transform:scaleX(0.9705);">TEKA</div>
<svg style="left:266px;top:289px" width="13" height="15" viewBox="0 0 13 15"><g fill="none" stroke="#6a6a6a" stroke-width="1.5" stroke-linecap="round"><path d="M8.3 2.3Q7 0.6 5.6 2.6L3.5 12Q3 14.2 1.4 12.8"/><path d="M2.4 6H7.6"/><path d="M7.6 8.6L11.4 12.4M11.4 8.6L7.6 12.4"/></g></svg>
<div class="t" style="left:798px;top:239.35px;font-size:14px;color:#3a3a3a;font-weight:bold;font-family:'Liberation Sans',sans-serif;font-style:normal;transform:scaleX(1.0002);">Electrical sub p</div>
<div class="abs" style="left:897px;top:222px;width:58px;height:790px;background:#fff;"></div>
<svg style="left:800px;top:289.5px" width="11" height="14" viewBox="0 0 11 14"><rect x="0.7" y="5.5" width="9.6" height="7.8" fill="none" stroke="#777" stroke-width="1.3"/><path d="M2.8 5.5V3.5A2.7 2.7 0 0 1 8.2 3.5V5.5" fill="none" stroke="#777" stroke-width="1.3"/><path d="M5.5 8V11" stroke="#777" stroke-width="1.3"/></svg>
<div class="abs" style="left:105px;top:309px;width:149px;height:2px;background:#3a4a8c;"></div>
<div class="abs" style="left:254px;top:306px;width:532px;height:5px;background:#5d8fd2;"></div>
<div class="abs" style="left:788px;top:309px;width:109px;height:2px;background:#3a4a8c;"></div>
<div class="abs" style="left:105px;top:577px;width:775px;height:27px;background:#edf2fa;"></div>
<div class="abs" style="left:105px;top:339px;width:775px;height:1px;background:#ededed;"></div>
<div class="abs" style="left:105px;top:340px;width:775px;height:1px;background:#f6f6f6;"></div>
<div class="t" style="left:104.5px;top:320.70px;font-size:13px;color:#8e8e8e;font-weight:normal;font-family:'Liberation Sans',sans-serif;font-style:normal;transform:scaleX(1.1064);">7333</div>
<div class="abs" style="left:105px;top:367px;width:775px;height:1px;background:#ededed;"></div>
<div class="abs" style="left:105px;top:368px;width:775px;height:1px;background:#f6f6f6;"></div>
<div class="t" style="left:104.5px;top:349.70px;font-size:13px;color:#8e8e8e;font-weight:normal;font-family:'Liberation Sans',sans-serif;font-style:normal;transform:scaleX(1.1064);">7533</div>
<div class="abs" style="left:105px;top:394px;width:775px;height:1px;background:#ededed;"></div>
<div class="abs" style="left:105px;top:395px;width:775px;height:1px;background:#f6f6f6;"></div>
<div class="t" style="left:104.5px;top:377.70px;font-size:13px;color:#8e8e8e;font-weight:normal;font-family:'Liberation Sans',sans-serif;font-style:normal;transform:scaleX(1.1064);">7534</div>
<div class="t" style="left:262px;top:373.28px;font-size:14.67px;color:#111;font-weight:normal;font-family:'Liberation Sans',sans-serif;font-style:normal;">MIB RH Honeywell conveyance (MIB) 480-0461267-0000_R01</div>
<div class="abs" style="left:105px;top:422px;width:775px;height:1px;background:#ededed;"></div>
<div class="abs" style="left:105px;top:423px;width:775px;height:1px;background:#f6f6f6;"></div>
<div class="t" style="left:104.5px;top:404.70px;font-size:13px;color:#8e8e8e;font-weight:normal;font-family:'Liberation Sans',sans-serif;font-style:normal;transform:scaleX(1.1064);">7580</div>
<div class="t" style="left:262px;top:400.28px;font-size:14.67px;color:#111;font-weight:normal;font-family:'Liberation Sans',sans-serif;font-style:normal;">MIB RH AC Electrical</div>
<div class="abs" style="left:105px;top:449px;width:775px;height:1px;background:#ededed;"></div>
<div class="abs" style="left:105px;top:450px;width:775px;height:1px;background:#f6f6f6;"></div>
<div class="t" style="left:104.5px;top:432.70px;font-size:13px;color:#8e8e8e;font-weight:normal;font-family:'Liberation Sans',sans-serif;font-style:normal;transform:scaleX(1.1064);">7589</div>
<div class="abs" style="left:105px;top:476px;width:775px;height:1px;background:#ededed;"></div>
<div class="abs" style="left:105px;top:477px;width:775px;height:1px;background:#f6f6f6;"></div>
<div class="t" style="left:104.5px;top:459.70px;font-size:13px;color:#8e8e8e;font-weight:normal;font-family:'Liberation Sans',sans-serif;font-style:normal;transform:scaleX(1.1064);">7590</div>
<div class="t" style="left:262px;top:455.28px;font-size:14.67px;color:#111;font-weight:normal;font-family:'Liberation Sans',sans-serif;font-style:normal;">MIB LH Honeywell conveyance (MIB) 480-0461264-0000_R01</div>
<div class="abs" style="left:105px;top:504px;width:775px;height:1px;background:#ededed;"></div>
<div class="abs" style="left:105px;top:505px;width:775px;height:1px;background:#f6f6f6;"></div>
<div class="t" style="left:104.5px;top:486.70px;font-size:13px;color:#8e8e8e;font-weight:normal;font-family:'Liberation Sans',sans-serif;font-style:normal;transform:scaleX(1.1064);">7636</div>
<div class="t" style="left:262px;top:482.28px;font-size:14.67px;color:#111;font-weight:normal;font-family:'Liberation Sans',sans-serif;font-style:normal;">MIB LH AC Electrical</div>
<div class="abs" style="left:105px;top:531px;width:775px;height:1px;background:#ededed;"></div>
<div class="abs" style="left:105px;top:532px;width:775px;height:1px;background:#f6f6f6;"></div>
<div class="t" style="left:104.5px;top:514.70px;font-size:13px;color:#8e8e8e;font-weight:normal;font-family:'Liberation Sans',sans-serif;font-style:normal;transform:scaleX(1.1064);">7645</div>
<div class="t" style="left:262px;top:510.28px;font-size:14.67px;color:#111;font-weight:normal;font-family:'Liberation Sans',sans-serif;font-style:normal;">MIB LH Power drop electrical</div>
<div class="abs" style="left:105px;top:576px;width:775px;height:1px;background:#ededed;"></div>
<div class="abs" style="left:105px;top:577px;width:775px;height:1px;background:#f6f6f6;"></div>
<div class="t" style="left:104.5px;top:541.70px;font-size:13px;color:#8e8e8e;font-weight:normal;font-family:'Liberation Sans',sans-serif;font-style:normal;transform:scaleX(1.1064);">7646</div>
<div class="t" style="left:262px;top:537.28px;font-size:14.67px;color:#111;font-weight:normal;font-family:'Liberation Sans',sans-serif;font-style:normal;">MIB LH H Mint. Areas, Laptops,Accessories</div>
<div class="abs" style="left:105px;top:604px;width:775px;height:1px;background:#ededed;"></div>
<div class="abs" style="left:105px;top:605px;width:775px;height:1px;background:#f6f6f6;"></div>
<div class="t" style="left:104px;top:586.70px;font-size:13px;color:#111;font-weight:bold;font-family:'Liberation Sans',sans-serif;font-style:normal;transform:scaleX(1.1064);">7647</div>
<svg style="left:148px;top:585px" width="4" height="15" viewBox="0 0 4 15"><circle cx="2" cy="2" r="1.6" fill="#555"/><circle cx="2" cy="7" r="1.6" fill="#555"/><circle cx="2" cy="12" r="1.6" fill="#555"/></svg>
<div class="t" style="left:262px;top:582.28px;font-size:14.67px;color:#111;font-weight:normal;font-family:'Liberation Sans',sans-serif;font-style:normal;">MIB LH Conduit H Mint. Areas, Laptops,Accessories</div>
<div class="abs" style="left:105px;top:631px;width:775px;height:1px;background:#ededed;"></div>
<div class="abs" style="left:105px;top:632px;width:775px;height:1px;background:#f6f6f6;"></div>
<div class="t" style="left:104.5px;top:614.70px;font-size:13px;color:#8e8e8e;font-weight:normal;font-family:'Liberation Sans',sans-serif;font-style:normal;transform:scaleX(1.1064);">7648</div>
<div class="t" style="left:262px;top:610.28px;font-size:14.67px;color:#111;font-weight:normal;font-family:'Liberation Sans',sans-serif;font-style:normal;">MIB LH Pulling cables H Mint. Areas, Laptops,Accessories</div>
<div class="abs" style="left:105px;top:659px;width:775px;height:1px;background:#ededed;"></div>
<div class="abs" style="left:105px;top:660px;width:775px;height:1px;background:#f6f6f6;"></div>
<div class="t" style="left:104.5px;top:641.70px;font-size:13px;color:#8e8e8e;font-weight:normal;font-family:'Liberation Sans',sans-serif;font-style:normal;transform:scaleX(1.1064);">7649</div>
<div class="t" style="left:262px;top:637.28px;font-size:14.67px;color:#111;font-weight:normal;font-family:'Liberation Sans',sans-serif;font-style:normal;">MIB LH Terminations H Mint. Areas, Laptops,Accessories</div>
<div class="abs" style="left:105px;top:704px;width:775px;height:1px;background:#ededed;"></div>
<div class="abs" style="left:105px;top:705px;width:775px;height:1px;background:#f6f6f6;"></div>
<div class="t" style="left:104.5px;top:669.70px;font-size:13px;color:#8e8e8e;font-weight:normal;font-family:'Liberation Sans',sans-serif;font-style:normal;transform:scaleX(1.1064);">7650</div>
<div class="t" style="left:262px;top:665.28px;font-size:14.67px;color:#111;font-weight:normal;font-family:'Liberation Sans',sans-serif;font-style:normal;">MIB LH R1 Inbound cell (MCP0001)(45KVA)</div>
<div class="abs" style="left:105px;top:732px;width:775px;height:1px;background:#ededed;"></div>
<div class="abs" style="left:105px;top:733px;width:775px;height:1px;background:#f6f6f6;"></div>
<div class="t" style="left:104.5px;top:714.70px;font-size:13px;color:#8e8e8e;font-weight:normal;font-family:'Liberation Sans',sans-serif;font-style:normal;transform:scaleX(1.1064);">7654</div>
<div class="t" style="left:262px;top:710.28px;font-size:14.67px;color:#111;font-weight:normal;font-family:'Liberation Sans',sans-serif;font-style:normal;">MIB LH P Adapter cell newtork PLC (UPS)</div>
<div class="abs" style="left:105px;top:759px;width:775px;height:1px;background:#ededed;"></div>
<div class="abs" style="left:105px;top:760px;width:775px;height:1px;background:#f6f6f6;"></div>
<div class="t" style="left:104.5px;top:742.70px;font-size:13px;color:#8e8e8e;font-weight:normal;font-family:'Liberation Sans',sans-serif;font-style:normal;transform:scaleX(1.1064);">7658</div>
<div class="t" style="left:262px;top:738.28px;font-size:14.67px;color:#111;font-weight:normal;font-family:'Liberation Sans',sans-serif;font-style:normal;">MIB LH V1 Inbound standard power</div>
<div class="abs" style="left:105px;top:787px;width:775px;height:1px;background:#ededed;"></div>
<div class="abs" style="left:105px;top:788px;width:775px;height:1px;background:#f6f6f6;"></div>
<div class="t" style="left:104.5px;top:769.70px;font-size:13px;color:#8e8e8e;font-weight:normal;font-family:'Liberation Sans',sans-serif;font-style:normal;transform:scaleX(1.1064);">7662</div>
<div class="t" style="left:262px;top:765.28px;font-size:14.67px;color:#111;font-weight:normal;font-family:'Liberation Sans',sans-serif;font-style:normal;">MIB LH V2 Inbound standard power</div>
<div class="abs" style="left:105px;top:814px;width:775px;height:1px;background:#ededed;"></div>
<div class="abs" style="left:105px;top:815px;width:775px;height:1px;background:#f6f6f6;"></div>
<div class="t" style="left:104.5px;top:797.70px;font-size:13px;color:#8e8e8e;font-weight:normal;font-family:'Liberation Sans',sans-serif;font-style:normal;transform:scaleX(1.1064);">7666</div>
<div class="abs" style="left:105px;top:842px;width:775px;height:1px;background:#ededed;"></div>
<div class="abs" style="left:105px;top:843px;width:775px;height:1px;background:#f6f6f6;"></div>
<div class="t" style="left:104.5px;top:824.70px;font-size:13px;color:#8e8e8e;font-weight:normal;font-family:'Liberation Sans',sans-serif;font-style:normal;transform:scaleX(1.1064);">7677</div>
<div class="abs" style="left:105px;top:869px;width:775px;height:1px;background:#ededed;"></div>
<div class="abs" style="left:105px;top:870px;width:775px;height:1px;background:#f6f6f6;"></div>
<div class="t" style="left:104.5px;top:852.70px;font-size:13px;color:#8e8e8e;font-weight:normal;font-family:'Liberation Sans',sans-serif;font-style:normal;transform:scaleX(1.1064);">7678</div>
<div class="abs" style="left:105px;top:897px;width:775px;height:1px;background:#ededed;"></div>
<div class="abs" style="left:105px;top:898px;width:775px;height:1px;background:#f6f6f6;"></div>
<div class="t" style="left:104.5px;top:879.70px;font-size:13px;color:#8e8e8e;font-weight:normal;font-family:'Liberation Sans',sans-serif;font-style:normal;transform:scaleX(1.1064);">7679</div>
<div class="abs" style="left:105px;top:924px;width:775px;height:1px;background:#ededed;"></div>
<div class="abs" style="left:105px;top:925px;width:775px;height:1px;background:#f6f6f6;"></div>
<div class="t" style="left:104.5px;top:907.70px;font-size:13px;color:#8e8e8e;font-weight:normal;font-family:'Liberation Sans',sans-serif;font-style:normal;transform:scaleX(1.1064);">7680</div>
<div class="abs" style="left:105px;top:952px;width:775px;height:1px;background:#ededed;"></div>
<div class="abs" style="left:105px;top:953px;width:775px;height:1px;background:#f6f6f6;"></div>
<div class="t" style="left:104.5px;top:934.70px;font-size:13px;color:#8e8e8e;font-weight:normal;font-family:'Liberation Sans',sans-serif;font-style:normal;transform:scaleX(1.1064);">7681</div>
<div class="abs" style="left:105px;top:979px;width:775px;height:1px;background:#ededed;"></div>
<div class="abs" style="left:105px;top:980px;width:775px;height:1px;background:#f6f6f6;"></div>
<div class="t" style="left:104.5px;top:962.70px;font-size:13px;color:#8e8e8e;font-weight:normal;font-family:'Liberation Sans',sans-serif;font-style:normal;transform:scaleX(1.1064);">7682</div>
<div class="t" style="left:104.5px;top:989.70px;font-size:13px;color:#8e8e8e;font-weight:normal;font-family:'Liberation Sans',sans-serif;font-style:normal;transform:scaleX(1.1064);">7686</div>
<div class="abs" style="left:254px;top:311px;width:1px;height:685px;background:#e2e2e2;"></div>
<div class="abs" style="left:255px;top:311px;width:1px;height:685px;background:#f3f3f3;"></div>
<div class="abs" style="left:105px;top:993px;width:58px;height:17px;background:#f7f6f4;"></div>
<div class="abs" style="left:163px;top:996px;width:734px;height:16px;background:#fff;"></div>
<div class="abs" style="left:105px;top:1010px;width:58px;height:2px;background:#fff;"></div>
<svg style="left:169px;top:1001px" width="6" height="8" viewBox="0 0 6 8"><path d="M6 0V8L0 4Z" fill="#9a9a9a"/></svg>
<div class="abs" style="left:340px;top:1000px;width:100px;height:9px;background:#a0a0a0;border-radius:4.5px"></div>
<svg style="left:775px;top:1001px" width="6" height="8" viewBox="0 0 6 8"><path d="M0 0V8L6 4Z" fill="#9a9a9a"/></svg>
<div class="abs" style="left:786px;top:231px;width:2px;height:781px;background:#bdbdbd;"></div>
<div class="abs" style="left:788px;top:231px;width:4px;height:781px;background:linear-gradient(90deg,rgba(0,0,0,0.06),rgba(0,0,0,0));"></div>
<svg style="left:794px;top:1001px" width="6" height="8" viewBox="0 0 6 8"><path d="M6 0V8L0 4Z" fill="#9a9a9a"/></svg>
<div class="abs" style="left:806px;top:1000px;width:17px;height:9px;background:#a0a0a0;border-radius:4.5px"></div>
<svg style="left:870px;top:1001px" width="6" height="8" viewBox="0 0 6 8"><path d="M0 0V8L6 4Z" fill="#9a9a9a"/></svg>
<svg style="left:885px;top:317px" width="8" height="6" viewBox="0 0 8 6"><path d="M0 6H8L4 0Z" fill="#9a9a9a"/></svg>
<div class="abs" style="left:886px;top:487px;width:7px;height:140px;background:#a0a0a0;border-radius:3.5px"></div>
<svg style="left:885.5px;top:985px" width="8" height="6" viewBox="0 0 8 6"><path d="M0 0H8L4 6Z" fill="#9a9a9a"/></svg>
<div class="abs" style="left:897px;top:222px;width:1px;height:790px;background:#e6e6e6;"></div>
<svg style="left:915.5px;top:241.0px" width="21" height="19" viewBox="0 0 21 19"><g fill="none" stroke="#3c3c3c" stroke-width="1.6" stroke-linejoin="round"><path d="M1 1H20V15H7L4.5 18V15H1Z"/></g></svg>
<svg style="left:915.5px;top:292.2px" width="21" height="21" viewBox="0 0 21 21"><g fill="none" stroke="#3c3c3c" stroke-width="1.6" stroke-linejoin="round"><g transform="rotate(45 10.5 10.5)"><rect x="6.8" y="-2.5" width="7.4" height="26" rx="3.7"/><path d="M10.5 2.5V15" stroke-linecap="round"/></g></g></svg>
<svg style="left:915.5px;top:344.6px" width="21" height="22" viewBox="0 0 21 22"><g fill="none" stroke="#3c3c3c" stroke-width="1.6" stroke-linejoin="round"><path d="M6 1.5H15M4 4.5H17"/><path d="M1 8H20V17L16 21H1Z"/><path d="M20 17H16V21"/></g></svg>
<svg style="left:915.5px;top:398.5px" width="21" height="21" viewBox="0 0 21 21"><g fill="none" stroke="#3c3c3c" stroke-width="1.6" stroke-linejoin="round"><path d="M17 1H1V21H17"/><path d="M18.5 7V16M16 13.5L18.5 16.3L21 13.5"/></g><text x="4.2" y="16" font-family="Liberation Sans" font-weight="bold" font-size="13" fill="#3c3c3c">B</text></svg>
<svg style="left:915.5px;top:450.5px" width="21" height="21" viewBox="0 0 21 21"><g fill="none" stroke="#3c3c3c" stroke-width="1.6" stroke-linejoin="round"><path d="M3.8 4.5A8.5 8.5 0 0 1 19 11.5M17.2 16.5A8.5 8.5 0 0 1 2 9.5"/><path d="M3 1V5H7M18 20V16H14"/><path d="M7 10.5L9.5 13L14 8"/></g></svg>
<svg style="left:917.0px;top:502.5px" width="18" height="23" viewBox="0 0 18 23"><g fill="none" stroke="#3c3c3c" stroke-width="1.6" stroke-linejoin="round"><path d="M1 1H12L17 6V22H1Z"/><path d="M12 1V6H17"/><path d="M9 19V10M6 13L9 10L12 13"/></g></svg>
<svg style="left:915.5px;top:557.0px" width="21" height="21" viewBox="0 0 21 21"><g fill="none" stroke="#3c3c3c" stroke-width="1.6" stroke-linejoin="round"><circle cx="10.5" cy="10.5" r="9.8"/><path d="M4 11H7L8.5 8L11 14L13 10H17"/></g></svg>
<svg style="left:916.0px;top:609.0px" width="20" height="22" viewBox="0 0 20 22"><g fill="none" stroke="#3c3c3c" stroke-width="1.6" stroke-linejoin="round"><path d="M5 4H13L19 10V21H5Z"/><path d="M13 21V17H19"/><path d="M5 4V2H12"/><path d="M1 6H5V18H1Z"/><path d="M8 9H11M8 12H11M8 15H11"/></g></svg>
<svg style="left:915.5px;top:665.0px" width="21" height="16" viewBox="0 0 21 16"><g fill="none" stroke="#3c3c3c" stroke-width="1.6" stroke-linejoin="round"><circle cx="6" cy="4" r="3"/><path d="M1 15V13Q1 9 6 9"/><rect x="11" y="2" width="9" height="4" rx="1"/><rect x="11" y="10" width="9" height="4" rx="1"/></g></svg>
<svg style="left:915.0px;top:714.1px" width="22" height="23" viewBox="0 0 22 23"><g fill="none" stroke="#3c3c3c" stroke-width="1.6" stroke-linejoin="round"><rect x="1" y="1" width="20" height="21"/><path d="M7 18V10M10.5 18V6M14 18V12M17 18V9"/></g></svg>
<svg style="left:914.5px;top:767.0px" width="23" height="22" viewBox="0 0 23 22"><g fill="none" stroke="#3c3c3c" stroke-width="1.6" stroke-linejoin="round"><path d="M1 21L6 17M17 5L22 1"/><path d="M6 17A3 3 0 0 1 4 14L8 10L13 15L9 19A3 3 0 0 1 6 17Z"/><path d="M13 10A3 3 0 0 1 12 7L15 4L19 8L16 11A3 3 0 0 1 13 10Z"/><path d="M9.5 11.5L12 9M12.5 14L15 11.5"/></g></svg>
<svg style="left:913.5px;top:818.6px" width="25" height="24" viewBox="0 0 25 24"><path d="M9 4Q10 11 17 13Q10 15 9 22Q8 15 1 13Q8 11 9 4Z" fill="#3c3c3c"/><path d="M19.5 0Q20 3.5 24 4.5Q20 5.5 19.5 9Q19 5.5 15 4.5Q19 3.5 19.5 0Z" fill="#3c3c3c"/></svg>
<div class="abs" style="left:105px;top:1012px;width:850px;height:15px;background:#0a2c57;"></div>
<div class="abs" style="left:160px;top:1015px;width:777px;height:9px;background:#10223b;border-radius:4.5px"></div>
<svg style="left:111px;top:1016px" width="6" height="8" viewBox="0 0 6 8"><path d="M6 0V8L0 4Z" fill="#061a33"/></svg>
<svg style="left:943px;top:1016px" width="6" height="8" viewBox="0 0 6 8"><path d="M0 0V8L6 4Z" fill="#061a33"/></svg>
<div class="abs" style="left:5px;top:114px;width:100px;height:913px;background:linear-gradient(180deg,#2e43be 0%,#3b41c3 35%,#5040ca 65%,#663cd6 100%);border-radius:8px 0 0 8px"></div>
<svg style="left:46px;top:138px" width="18" height="17" viewBox="0 0 18 17"><path d="M9 0.5Q10 0.5 11 1.3L16.5 6.2Q17.5 7 17.5 8.5V14.5Q17.5 16.8 15.2 16.8H2.8Q0.5 16.8 0.5 14.5V8.5Q0.5 7 1.5 6.2L7 1.3Q8 0.5 9 0.5Z" fill="#c8cbf0"/></svg>
<div class="t" style="left:37px;top:166.00px;font-size:13px;color:#c8cbf0;font-weight:bold;font-family:'Liberation Sans',sans-serif;font-style:normal;transform:scaleX(0.9965);">Home</div>
<svg style="left:48px;top:201px" width="14" height="19" viewBox="0 0 14 19"><path d="M7 1A5 5 0 0 1 12 6V11L13.5 13.5H0.5L2 11V6A5 5 0 0 1 7 1Z" fill="#c8cbf0"/><rect x="5" y="14.5" width="4" height="2" rx="1" fill="#c8cbf0"/></svg>
<div class="abs" style="left:47px;top:195px;width:22px;height:16px;background:#c2452d;border-radius:8px"></div>
<div class="t" style="left:50.5px;top:198.19px;font-size:11px;color:#fff;font-weight:bold;font-family:'Liberation Sans',sans-serif;font-style:normal;transform:scaleX(1.2245);">54</div>
<div class="t" style="left:16px;top:227.00px;font-size:13px;color:#c8cbf0;font-weight:bold;font-family:'Liberation Sans',sans-serif;font-style:normal;transform:scaleX(0.9907);">Notifications</div>
<svg style="left:47px;top:262px" width="16" height="16" viewBox="0 0 16 16"><circle cx="6.5" cy="6.5" r="6" fill="#c8cbf0"/><path d="M10.5 10.5L15 15" stroke="#c8cbf0" stroke-width="2.4" stroke-linecap="round"/></svg>
<div class="t" style="left:34px;top:288.60px;font-size:13px;color:#c8cbf0;font-weight:bold;font-family:'Liberation Sans',sans-serif;font-style:normal;transform:scaleX(0.9452);">Search</div>
<svg style="left:46px;top:324px" width="18" height="15" viewBox="0 0 18 15"><path d="M2 0.5H6.5L8.5 2.5H16Q17.5 2.5 17.5 4V13Q17.5 14.5 16 14.5H2Q0.5 14.5 0.5 13V2Q0.5 0.5 2 0.5Z" fill="#c8cbf0"/></svg>
<div class="t" style="left:32.5px;top:350.00px;font-size:13px;color:#c8cbf0;font-weight:bold;font-family:'Liberation Sans',sans-serif;font-style:normal;transform:scaleX(0.9474);">Browse</div>
<svg style="left:46px;top:384px" width="18" height="18" viewBox="0 0 18 18"><circle cx="9" cy="9" r="9" fill="#c8cbf0"/><path d="M8 5V9.5L11 11.5" fill="none" stroke="#3a41c2" stroke-width="1.8" stroke-linecap="round"/></svg>
<div class="t" style="left:30.5px;top:412.00px;font-size:13px;color:#c8cbf0;font-weight:bold;font-family:'Liberation Sans',sans-serif;font-style:normal;transform:scaleX(0.9728);">Recents</div>
<svg style="left:46px;top:446px" width="18" height="18" viewBox="0 0 18 18"><path d="M9 0.8L11.5 6L17.2 6.7L13 10.6L14.1 16.3L9 13.5L3.9 16.3L5 10.6L0.8 6.7L6.5 6Z" fill="#c8cbf0" stroke="#c8cbf0" stroke-width="1.2" stroke-linejoin="round"/></svg>
<div class="t" style="left:27.5px;top:473.00px;font-size:13px;color:#c8cbf0;font-weight:bold;font-family:'Liberation Sans',sans-serif;font-style:normal;transform:scaleX(0.9600);">Favorites</div>
<svg style="left:46px;top:509px" width="18" height="13" viewBox="0 0 18 13"><circle cx="5" cy="3" r="3" fill="#c8cbf0"/><path d="M0 11Q0 7 5 7Q10 7 10 11V13H0Z" fill="#c8cbf0"/><rect x="10" y="2.5" width="8" height="3.5" rx="1.5" fill="#c8cbf0"/><rect x="10" y="8.5" width="7" height="4" rx="1.5" fill="#c8cbf0"/></svg>
<div class="t" style="left:27px;top:535.40px;font-size:13px;color:#c8cbf0;font-weight:bold;font-family:'Liberation Sans',sans-serif;font-style:normal;transform:scaleX(0.9485);">Resource</div>
<div class="t" style="left:14.7px;top:553.50px;font-size:13px;color:#c8cbf0;font-weight:bold;font-family:'Liberation Sans',sans-serif;font-style:normal;transform:scaleX(1.0168);">Management</div>
<svg style="left:45px;top:588px" width="20" height="16" viewBox="0 0 20 16"><rect x="7.4" y="1.1" width="5.2" height="5.2" rx="1.6" fill="#c8cbf0" transform="rotate(45 10 3.7)"/><rect x="1.2999999999999998" y="5.4" width="5.2" height="5.2" rx="1.6" fill="#c8cbf0" transform="rotate(45 3.9 8)"/><rect x="13.500000000000002" y="5.4" width="5.2" height="5.2" rx="1.6" fill="#c8cbf0" transform="rotate(45 16.1 8)"/><rect x="7.4" y="9.700000000000001" width="5.2" height="5.2" rx="1.6" fill="#c8cbf0" transform="rotate(45 10 12.3)"/></svg>
<div class="t" style="left:23.5px;top:614.20px;font-size:13px;color:#c8cbf0;font-weight:bold;font-family:'Liberation Sans',sans-serif;font-style:normal;transform:scaleX(0.9758);">WorkApps</div>
<div class="abs" style="left:40px;top:650px;width:30px;height:31px;background:#7d71d9;border-radius:50%"></div>
<svg style="left:47px;top:658px" width="16" height="16" viewBox="0 0 16 16"><path d="M8 1V15M1 8H15" stroke="#fff" stroke-width="1.8"/></svg>
<div class="t" style="left:34.6px;top:688.00px;font-size:13px;color:#c8cbf0;font-weight:bold;font-family:'Liberation Sans',sans-serif;font-style:normal;transform:scaleX(1.0082);">Create</div>
<div class="abs" style="left:25px;top:725px;width:60px;height:2px;background:#8e84df;"></div>
<div class="abs" style="left:37px;top:747px;width:36px;height:35px;background:#8376dc;border-radius:8px;border:1.5px solid #9c92e6"></div>
<svg style="left:45.5px;top:757px" width="18" height="15" viewBox="0 0 18 15"><path d="M2 0.5H6.5L8.5 2H16Q17.5 2 17.5 3.5V13Q17.5 14.5 16 14.5H2Q0.5 14.5 0.5 13V2Q0.5 0.5 2 0.5Z" fill="#fff"/><circle cx="6.8" cy="6.8" r="1.7" fill="#8376dc"/><circle cx="11.2" cy="6.8" r="1.7" fill="#8376dc"/><path d="M3.8 12Q4 9.3 6.8 9.3Q9.2 9.3 9.3 12Z M8.7 12Q8.9 9.3 11.2 9.3Q14 9.3 14.2 12Z" fill="#8376dc"/></svg>
<div class="t" style="left:21px;top:785.70px;font-size:13px;color:#c8cbf0;font-weight:bold;font-family:'Liberation Sans',sans-serif;font-style:normal;transform:scaleX(0.9792);">Workspace</div>
<svg style="left:46px;top:899px" width="18" height="18" viewBox="0 0 18 18"><circle cx="2.5" cy="2.5" r="2.5" fill="#c8cbf0"/><circle cx="2.5" cy="9.0" r="2.5" fill="#c8cbf0"/><circle cx="2.5" cy="15.5" r="2.5" fill="#c8cbf0"/><circle cx="9.0" cy="2.5" r="2.5" fill="#c8cbf0"/><circle cx="9.0" cy="9.0" r="2.5" fill="#c8cbf0"/><circle cx="9.0" cy="15.5" r="2.5" fill="#c8cbf0"/><circle cx="15.5" cy="2.5" r="2.5" fill="#c8cbf0"/><circle cx="15.5" cy="9.0" r="2.5" fill="#c8cbf0"/><circle cx="15.5" cy="15.5" r="2.5" fill="#c8cbf0"/></svg>
<div class="abs" style="left:46px;top:943px;width:18px;height:18px;background:#c8cbf0;border-radius:50%"></div>
<div class="t" style="left:51.8px;top:946.69px;font-size:11px;color:#5a3fd0;font-weight:bold;font-family:'Liberation Sans',sans-serif;font-style:normal;">?</div>
<svg style="left:46.7px;top:987px" width="17" height="18" viewBox="0 0 17 18"><circle cx="8.5" cy="4.6" r="4.4" fill="#c8cbf0"/><path d="M0 17Q0 10 8.5 10Q17 10 17 17Z" fill="#c8cbf0"/></svg>
</div>
<div class="clip" style="left:0;top:0;width:1920px;height:1080px;clip-path:inset(114px 5px 53px 965px round 8px)">
<div class="abs" style="left:965px;top:114px;width:950px;height:107px;background:#ffffff;"></div>
<div class="abs" style="left:965px;top:221px;width:950px;height:1px;background:#dadada;"></div>
<div class="t" style="left:1093.1px;top:137.10px;font-size:15px;color:#3d3d3d;font-weight:normal;font-family:'Liberation Sans',sans-serif;font-style:normal;transform:scaleX(0.9970);">File</div>
<div class="t" style="left:1147px;top:137.10px;font-size:15px;color:#3d3d3d;font-weight:normal;font-family:'Liberation Sans',sans-serif;font-style:normal;transform:scaleX(1.0805);">Automation</div>
<div class="t" style="left:1258.7px;top:137.10px;font-size:15px;color:#3d3d3d;font-weight:normal;font-family:'Liberation Sans',sans-serif;font-style:normal;transform:scaleX(1.0188);">Forms</div>
<div class="t" style="left:1323px;top:137.10px;font-size:15px;color:#3d3d3d;font-weight:normal;font-family:'Liberation Sans',sans-serif;font-style:normal;transform:scaleX(1.0793);">Connections</div>
<div class="t" style="left:1434.8px;top:137.10px;font-size:15px;color:#3d3d3d;font-weight:normal;font-family:'Liberation Sans',sans-serif;font-style:normal;transform:scaleX(1.0647);">Dynamic View</div>
<svg style="left:1541.8px;top:135px" width="18" height="22" viewBox="0 0 18 22"><path d="M1 1H16.5V15.5L11.5 20.5H1Z" fill="#dde7f8" stroke="#2d7ad6" stroke-width="1.6" stroke-linejoin="round"/><path d="M16.5 15.5H11.5V20.5" fill="#fff" stroke="#2d7ad6" stroke-width="1.6" stroke-linejoin="round"/></svg>
<svg style="left:1574px;top:138px" width="19" height="18" viewBox="0 0 19 18"><path d="M10 1.8L12.4 6.9L17.8 7.5L13.8 11.2L14.9 16.6L10 13.9L5.1 16.6L6.2 11.2L2.2 7.5L7.6 6.9Z" fill="none" stroke="#333" stroke-width="1.7" stroke-linejoin="round"/><rect x="0" y="0.5" width="7" height="3" fill="#333"/><rect x="0" y="0.5" width="4" height="10" fill="#333"/></svg>
<div class="abs" style="left:1839px;top:123px;width:100px;height:44px;background:#0f7b83;border-radius:5px"></div>
<div class="t" style="left:1856px;top:137.30px;font-size:15px;color:#fff;font-weight:bold;font-family:'Liberation Sans',sans-serif;font-style:normal;transform:scaleX(1.0431);">Share</div>
<svg style="left:1082px;top:189.5px" width="18" height="18" viewBox="0 0 18 18"><g fill="none" stroke="#c9c9c9" stroke-width="1.6"><path d="M1.5 1H13.5L17 4.5V17H1Z"/><rect x="4.5" y="1" width="8" height="5"/><rect x="4" y="10.5" width="10" height="6.5"/></g></svg>
<svg style="left:1122px;top:189px" width="18" height="18" viewBox="0 0 18 18"><g fill="none" stroke="#3c3c3c" stroke-width="1.6"><rect x="4" y="0.8" width="10" height="4.5"/><path d="M4 13.5H1.5Q0.8 13.5 0.8 12.8V6Q0.8 5 1.8 5H16.2Q17.2 5 17.2 6V12.8Q17.2 13.5 16.5 13.5H14"/><rect x="4" y="10" width="10" height="7.2"/></g><circle cx="14" cy="7.6" r="0.9" fill="#3c3c3c"/></svg>
<svg style="left:1162.5px;top:189px" width="17" height="18" viewBox="0 0 17 18"><g fill="none" stroke="#c9c9c9" stroke-width="1.6" stroke-linecap="round"><path d="M2 6H10.5A5.5 5.5 0 0 1 10.5 17H5"/><path d="M5.5 2L1.5 6L5.5 10"/></g></svg>
<svg style="left:1201px;top:189px" width="17" height="18" viewBox="0 0 17 18"><g fill="none" stroke="#c9c9c9" stroke-width="1.6" stroke-linecap="round"><path d="M15 6H6.5A5.5 5.5 0 0 0 6.5 17H12"/><path d="M11.5 2L15.5 6L11.5 10"/></g></svg>
<div class="abs" style="left:1241.5px;top:184px;width:2px;height:28px;background:#dcdcdc;"></div>
<svg style="left:1265px;top:189px" width="18" height="18" viewBox="0 0 18 18"><g fill="none" stroke="#3c3c3c" stroke-width="1.6"><rect x="0.8" y="0.8" width="16.4" height="16.4" rx="1"/><path d="M0.8 5.5H17.2M0.8 11H17.2M6.2 5.5V17.2M11.7 5.5V17.2"/></g></svg>
<div class="t" style="left:1294px;top:190.30px;font-size:15px;color:#3c3c3c;font-weight:bold;font-family:'Liberation Sans',sans-serif;font-style:normal;transform:scaleX(0.9078);">Grid</div>
<svg style="left:1336.8px;top:195.5px" width="7" height="5" viewBox="0 0 7 5"><path d="M0 0H7L3.5 4.6Z" fill="#3c3c3c"/></svg>
<svg style="left:1368px;top:189px" width="18" height="19" viewBox="0 0 18 19"><path d="M1 1.5H17L11 9.5V17L7 18V9.5Z" fill="none" stroke="#3c3c3c" stroke-width="1.6" stroke-linejoin="round"/></svg>
<div class="t" style="left:1390px;top:190.30px;font-size:15px;color:#3c3c3c;font-weight:bold;font-family:'Liberation Sans',sans-serif;font-style:normal;transform:scaleX(0.9404);">Filter</div>
<div class="abs" style="left:1450px;top:184px;width:2px;height:28px;background:#dcdcdc;"></div>
<svg style="left:1473px;top:190.5px" width="18" height="14" viewBox="0 0 18 14"><g fill="none" stroke="#c9c9c9" stroke-width="1.6"><path d="M0.5 1H17.5M0.5 13H17.5M8 5H17.5M8 9H17.5"/><path d="M5 4L2 7L5 10"/></g></svg>
<svg style="left:1513px;top:190.5px" width="18" height="14" viewBox="0 0 18 14"><g fill="none" stroke="#c9c9c9" stroke-width="1.6"><path d="M0.5 1H17.5M0.5 13H17.5M0.5 5H10M0.5 9H10"/><path d="M13 4L16 7L13 10"/></g></svg>
<div class="abs" style="left:1553.5px;top:184px;width:2px;height:28px;background:#dcdcdc;"></div>
<div class="t" style="left:1583.5px;top:190.30px;font-size:15px;color:#3c3c3c;font-weight:bold;font-family:'Liberation Sans',sans-serif;font-style:normal;transform:scaleX(0.9443);">Arial</div>
<svg style="left:1628.3px;top:195.5px" width="7" height="5" viewBox="0 0 7 5"><path d="M0 0H7L3.5 4.6Z" fill="#3c3c3c"/></svg>
<div class="abs" style="left:1659.5px;top:184px;width:2px;height:28px;background:#dcdcdc;"></div>
<div class="t" style="left:1690px;top:190.30px;font-size:15px;color:#3c3c3c;font-weight:bold;font-family:'Liberation Sans',sans-serif;font-style:normal;transform:scaleX(0.9588);">10</div>
<svg style="left:1720px;top:195.5px" width="7" height="5" viewBox="0 0 7 5"><path d="M0 0H7L3.5 4.6Z" fill="#3c3c3c"/></svg>
<div class="abs" style="left:1750.5px;top:184px;width:2px;height:28px;background:#dcdcdc;"></div>
<svg style="left:1773.8px;top:195.5px" width="18" height="5" viewBox="0 0 18 5"><circle cx="2.3" cy="2.5" r="2.2" fill="#3c3c3c"/><circle cx="9" cy="2.5" r="2.2" fill="#3c3c3c"/><circle cx="15.7" cy="2.5" r="2.2" fill="#3c3c3c"/></svg>
<div class="abs" style="left:1065px;top:222px;width:850px;height:790px;background:#fff;"></div>
<div class="abs" style="left:1065px;top:222px;width:833px;height:87px;background:#f7f6f4;"></div>
<div class="abs" style="left:1065px;top:311px;width:26px;height:682px;background:#f7f6f4;"></div>
<div class="abs" style="left:1242px;top:235px;width:1px;height:74px;background:#e0e0e0;"></div>
<div class="abs" style="left:1407px;top:235px;width:1px;height:74px;background:#e0e0e0;"></div>
<div class="abs" style="left:1572px;top:235px;width:1px;height:74px;background:#e0e0e0;"></div>
<div class="abs" style="left:1737px;top:235px;width:1px;height:74px;background:#e0e0e0;"></div>
<div class="t" style="left:1253.4px;top:239.05px;font-size:14px;color:#3a3a3a;font-weight:bold;font-family:'Liberation Sans',sans-serif;font-style:normal;transform:scaleX(0.9989);">Conduit R1 Inbound</div>
<div class="t" style="left:1253.4px;top:255.75px;font-size:14px;color:#3a3a3a;font-weight:bold;font-family:'Liberation Sans',sans-serif;font-style:normal;transform:scaleX(1.0726);">cell (MCP0001)</div>
<div class="t" style="left:1253.4px;top:272.45px;font-size:14px;color:#3a3a3a;font-weight:bold;font-family:'Liberation Sans',sans-serif;font-style:normal;transform:scaleX(1.0782);">(45KVA)</div>
<div class="t" style="left:1418px;top:239.05px;font-size:14px;color:#3a3a3a;font-weight:bold;font-family:'Liberation Sans',sans-serif;font-style:normal;transform:scaleX(0.9919);">Pulling cables R1</div>
<div class="t" style="left:1418px;top:255.75px;font-size:14px;color:#3a3a3a;font-weight:bold;font-family:'Liberation Sans',sans-serif;font-style:normal;transform:scaleX(1.0188);">Inbound cell</div>
<div class="t" style="left:1418px;top:272.45px;font-size:14px;color:#3a3a3a;font-weight:bold;font-family:'Liberation Sans',sans-serif;font-style:normal;transform:scaleX(1.1000);">(MCP0001)(45KVA)</div>
<div class="t" style="left:1583.4px;top:239.05px;font-size:14px;color:#3a3a3a;font-weight:bold;font-family:'Liberation Sans',sans-serif;font-style:normal;transform:scaleX(1.0050);">Terminations R1</div>
<div class="t" style="left:1583.4px;top:255.75px;font-size:14px;color:#3a3a3a;font-weight:bold;font-family:'Liberation Sans',sans-serif;font-style:normal;transform:scaleX(1.0188);">Inbound cell</div>
<div class="t" style="left:1583.4px;top:272.45px;font-size:14px;color:#3a3a3a;font-weight:bold;font-family:'Liberation Sans',sans-serif;font-style:normal;transform:scaleX(1.0928);">(MCP0001)(45KVA)</div>
<div class="t" style="left:1748.5px;top:239.05px;font-size:14px;color:#3a3a3a;font-weight:bold;font-family:'Liberation Sans',sans-serif;font-style:normal;transform:scaleX(0.9919);">Column112</div>
<div class="abs" style="left:1091px;top:309px;width:807px;height:2px;background:#3a4a8c;"></div>
<div class="abs" style="left:1091px;top:337px;width:791px;height:1px;background:#e3e3e3;"></div>
<div class="abs" style="left:1091px;top:364px;width:791px;height:1px;background:#e3e3e3;"></div>
<div class="abs" style="left:1091px;top:392px;width:791px;height:1px;background:#e3e3e3;"></div>
<div class="abs" style="left:1091px;top:420px;width:791px;height:1px;background:#e3e3e3;"></div>
<div class="abs" style="left:1091px;top:447px;width:791px;height:1px;background:#e3e3e3;"></div>
<div class="abs" style="left:1091px;top:474px;width:791px;height:1px;background:#e3e3e3;"></div>
<div class="abs" style="left:1091px;top:502px;width:791px;height:1px;background:#e3e3e3;"></div>
<div class="abs" style="left:1091px;top:530px;width:791px;height:1px;background:#e3e3e3;"></div>
<div class="abs" style="left:1091px;top:557px;width:791px;height:1px;background:#e3e3e3;"></div>
<div class="abs" style="left:1091px;top:584px;width:791px;height:1px;background:#e3e3e3;"></div>
<div class="abs" style="left:1091px;top:612px;width:791px;height:1px;background:#e3e3e3;"></div>
<div class="abs" style="left:1091px;top:640px;width:791px;height:1px;background:#e3e3e3;"></div>
<div class="abs" style="left:1091px;top:667px;width:791px;height:1px;background:#e3e3e3;"></div>
<div class="abs" style="left:1091px;top:694px;width:791px;height:1px;background:#e3e3e3;"></div>
<div class="abs" style="left:1091px;top:722px;width:791px;height:1px;background:#e3e3e3;"></div>
<div class="abs" style="left:1091px;top:750px;width:791px;height:1px;background:#e3e3e3;"></div>
<div class="abs" style="left:1091px;top:777px;width:791px;height:1px;background:#e3e3e3;"></div>
<div class="abs" style="left:1091px;top:804px;width:791px;height:1px;background:#e3e3e3;"></div>
<div class="abs" style="left:1091px;top:832px;width:791px;height:1px;background:#e3e3e3;"></div>
<div class="abs" style="left:1091px;top:860px;width:791px;height:1px;background:#e3e3e3;"></div>
<div class="abs" style="left:1091px;top:887px;width:791px;height:1px;background:#e3e3e3;"></div>
<div class="abs" style="left:1091px;top:914px;width:791px;height:1px;background:#e3e3e3;"></div>
<div class="abs" style="left:1091px;top:942px;width:791px;height:1px;background:#e3e3e3;"></div>
<div class="abs" style="left:1091px;top:970px;width:791px;height:1px;background:#e3e3e3;"></div>
<div class="t" style="left:1137px;top:318.80px;font-size:13px;color:#8e8e8e;font-weight:normal;font-family:'Liberation Sans',sans-serif;font-style:normal;transform:translateX(-100%);">1</div>
<div class="t" style="left:1137px;top:346.30px;font-size:13px;color:#8e8e8e;font-weight:normal;font-family:'Liberation Sans',sans-serif;font-style:normal;transform:translateX(-100%);">2</div>
<div class="t" style="left:1137px;top:373.80px;font-size:13px;color:#8e8e8e;font-weight:normal;font-family:'Liberation Sans',sans-serif;font-style:normal;transform:translateX(-100%);">3</div>
<div class="t" style="left:1137px;top:401.30px;font-size:13px;color:#8e8e8e;font-weight:normal;font-family:'Liberation Sans',sans-serif;font-style:normal;transform:translateX(-100%);">4</div>
<div class="t" style="left:1137px;top:428.80px;font-size:13px;color:#8e8e8e;font-weight:normal;font-family:'Liberation Sans',sans-serif;font-style:normal;transform:translateX(-100%);">5</div>
<div class="t" style="left:1137px;top:456.30px;font-size:13px;color:#8e8e8e;font-weight:normal;font-family:'Liberation Sans',sans-serif;font-style:normal;transform:translateX(-100%);">6</div>
<div class="t" style="left:1137px;top:483.80px;font-size:13px;color:#8e8e8e;font-weight:normal;font-family:'Liberation Sans',sans-serif;font-style:normal;transform:translateX(-100%);">7</div>
<div class="t" style="left:1137px;top:511.30px;font-size:13px;color:#8e8e8e;font-weight:normal;font-family:'Liberation Sans',sans-serif;font-style:normal;transform:translateX(-100%);">8</div>
<div class="t" style="left:1137px;top:538.80px;font-size:13px;color:#8e8e8e;font-weight:normal;font-family:'Liberation Sans',sans-serif;font-style:normal;transform:translateX(-100%);">9</div>
<div class="t" style="left:1137px;top:566.30px;font-size:13px;color:#8e8e8e;font-weight:normal;font-family:'Liberation Sans',sans-serif;font-style:normal;transform:translateX(-100%);">10</div>
<div class="t" style="left:1137px;top:593.80px;font-size:13px;color:#8e8e8e;font-weight:normal;font-family:'Liberation Sans',sans-serif;font-style:normal;transform:translateX(-100%);">11</div>
<div class="t" style="left:1137px;top:621.30px;font-size:13px;color:#8e8e8e;font-weight:normal;font-family:'Liberation Sans',sans-serif;font-style:normal;transform:translateX(-100%);">12</div>
<div class="t" style="left:1137px;top:648.80px;font-size:13px;color:#8e8e8e;font-weight:normal;font-family:'Liberation Sans',sans-serif;font-style:normal;transform:translateX(-100%);">13</div>
<div class="t" style="left:1137px;top:676.30px;font-size:13px;color:#8e8e8e;font-weight:normal;font-family:'Liberation Sans',sans-serif;font-style:normal;transform:translateX(-100%);">14</div>
<div class="t" style="left:1137px;top:703.80px;font-size:13px;color:#8e8e8e;font-weight:normal;font-family:'Liberation Sans',sans-serif;font-style:normal;transform:translateX(-100%);">15</div>
<div class="t" style="left:1137px;top:731.30px;font-size:13px;color:#8e8e8e;font-weight:normal;font-family:'Liberation Sans',sans-serif;font-style:normal;transform:translateX(-100%);">16</div>
<div class="t" style="left:1137px;top:758.80px;font-size:13px;color:#8e8e8e;font-weight:normal;font-family:'Liberation Sans',sans-serif;font-style:normal;transform:translateX(-100%);">17</div>
<div class="t" style="left:1137px;top:786.30px;font-size:13px;color:#8e8e8e;font-weight:normal;font-family:'Liberation Sans',sans-serif;font-style:normal;transform:translateX(-100%);">18</div>
<div class="t" style="left:1137px;top:813.80px;font-size:13px;color:#8e8e8e;font-weight:normal;font-family:'Liberation Sans',sans-serif;font-style:normal;transform:translateX(-100%);">19</div>
<div class="t" style="left:1137px;top:841.30px;font-size:13px;color:#8e8e8e;font-weight:normal;font-family:'Liberation Sans',sans-serif;font-style:normal;transform:translateX(-100%);">20</div>
<div class="t" style="left:1137px;top:868.80px;font-size:13px;color:#8e8e8e;font-weight:normal;font-family:'Liberation Sans',sans-serif;font-style:normal;transform:translateX(-100%);">21</div>
<div class="t" style="left:1137px;top:896.30px;font-size:13px;color:#8e8e8e;font-weight:normal;font-family:'Liberation Sans',sans-serif;font-style:normal;transform:translateX(-100%);">22</div>
<div class="t" style="left:1137px;top:923.80px;font-size:13px;color:#8e8e8e;font-weight:normal;font-family:'Liberation Sans',sans-serif;font-style:normal;transform:translateX(-100%);">23</div>
<div class="t" style="left:1137px;top:951.30px;font-size:13px;color:#8e8e8e;font-weight:normal;font-family:'Liberation Sans',sans-serif;font-style:normal;transform:translateX(-100%);">24</div>
<div class="t" style="left:1137px;top:978.80px;font-size:13px;color:#8e8e8e;font-weight:normal;font-family:'Liberation Sans',sans-serif;font-style:normal;transform:translateX(-100%);">25</div>
<div class="abs" style="left:1241px;top:311px;width:1px;height:682px;background:#f7f7f7;"></div>
<div class="abs" style="left:1242px;top:311px;width:1px;height:682px;background:#efefef;"></div>
<div class="abs" style="left:1406px;top:311px;width:1px;height:682px;background:#f7f7f7;"></div>
<div class="abs" style="left:1407px;top:311px;width:1px;height:682px;background:#efefef;"></div>
<div class="abs" style="left:1571px;top:311px;width:1px;height:682px;background:#f7f7f7;"></div>
<div class="abs" style="left:1572px;top:311px;width:1px;height:682px;background:#efefef;"></div>
<div class="abs" style="left:1736px;top:311px;width:1px;height:682px;background:#f7f7f7;"></div>
<div class="abs" style="left:1737px;top:311px;width:1px;height:682px;background:#efefef;"></div>
<div class="abs" style="left:1898px;top:222px;width:1px;height:790px;background:#e6e6e6;"></div>
<div class="abs" style="left:1091px;top:993px;width:73px;height:17px;background:#f7f6f4;"></div>
<div class="abs" style="left:1164px;top:993px;width:734px;height:19px;background:#fff;"></div>
<svg style="left:1170px;top:1001px" width="6" height="8" viewBox="0 0 6 8"><path d="M6 0V8L0 4Z" fill="#9a9a9a"/></svg>
<div class="abs" style="left:1222px;top:1000px;width:25px;height:9px;background:#a0a0a0;border-radius:4.5px"></div>
<svg style="left:1871px;top:1001px" width="6" height="8" viewBox="0 0 6 8"><path d="M0 0V8L6 4Z" fill="#9a9a9a"/></svg>
<svg style="left:1886px;top:317px" width="8" height="6" viewBox="0 0 8 6"><path d="M0 6H8L4 0Z" fill="#9a9a9a"/></svg>
<div class="abs" style="left:1885.5px;top:329px;width:10px;height:324px;background:#a0a0a0;border-radius:5px"></div>
<svg style="left:1886.7px;top:985px" width="8" height="6" viewBox="0 0 8 6"><path d="M0 0H8L4 6Z" fill="#9a9a9a"/></svg>
<div class="abs" style="left:1065px;top:1012px;width:850px;height:15px;background:#0a2c57;"></div>
<div class="abs" style="left:1083px;top:1015px;width:777px;height:9px;background:#10223b;border-radius:4.5px"></div>
<svg style="left:1071px;top:1016px" width="6" height="8" viewBox="0 0 6 8"><path d="M6 0V8L0 4Z" fill="#061a33"/></svg>
<svg style="left:1903px;top:1016px" width="6" height="8" viewBox="0 0 6 8"><path d="M0 0V8L6 4Z" fill="#061a33"/></svg>
<div class="abs" style="left:965px;top:114px;width:100px;height:913px;background:linear-gradient(180deg,#2e43be 0%,#3b41c3 35%,#5040ca 65%,#663cd6 100%);border-radius:8px 0 0 8px"></div>
<svg style="left:1006px;top:138px" width="18" height="17" viewBox="0 0 18 17"><path d="M9 0.5Q10 0.5 11 1.3L16.5 6.2Q17.5 7 17.5 8.5V14.5Q17.5 16.8 15.2 16.8H2.8Q0.5 16.8 0.5 14.5V8.5Q0.5 7 1.5 6.2L7 1.3Q8 0.5 9 0.5Z" fill="#c8cbf0"/></svg>
<div class="t" style="left:997px;top:166.00px;font-size:13px;color:#c8cbf0;font-weight:bold;font-family:'Liberation Sans',sans-serif;font-style:normal;transform:scaleX(0.9965);">Home</div>
<svg style="left:1008px;top:201px" width="14" height="19" viewBox="0 0 14 19"><path d="M7 1A5 5 0 0 1 12 6V11L13.5 13.5H0.5L2 11V6A5 5 0 0 1 7 1Z" fill="#c8cbf0"/><rect x="5" y="14.5" width="4" height="2" rx="1" fill="#c8cbf0"/></svg>
<div class="abs" style="left:1007px;top:195px;width:22px;height:16px;background:#c2452d;border-radius:8px"></div>
<div class="t" style="left:1010.5px;top:198.19px;font-size:11px;color:#fff;font-weight:bold;font-family:'Liberation Sans',sans-serif;font-style:normal;transform:scaleX(1.2245);">54</div>
<div class="t" style="left:976px;top:227.00px;font-size:13px;color:#c8cbf0;font-weight:bold;font-family:'Liberation Sans',sans-serif;font-style:normal;transform:scaleX(0.9907);">Notifications</div>
<svg style="left:1007px;top:262px" width="16" height="16" viewBox="0 0 16 16"><circle cx="6.5" cy="6.5" r="6" fill="#c8cbf0"/><path d="M10.5 10.5L15 15" stroke="#c8cbf0" stroke-width="2.4" stroke-linecap="round"/></svg>
<div class="t" style="left:994px;top:288.60px;font-size:13px;color:#c8cbf0;font-weight:bold;font-family:'Liberation Sans',sans-serif;font-style:normal;transform:scaleX(0.9452);">Search</div>
<svg style="left:1006px;top:324px" width="18" height="15" viewBox="0 0 18 15"><path d="M2 0.5H6.5L8.5 2.5H16Q17.5 2.5 17.5 4V13Q17.5 14.5 16 14.5H2Q0.5 14.5 0.5 13V2Q0.5 0.5 2 0.5Z" fill="#c8cbf0"/></svg>
<div class="t" style="left:992.5px;top:350.00px;font-size:13px;color:#c8cbf0;font-weight:bold;font-family:'Liberation Sans',sans-serif;font-style:normal;transform:scaleX(0.9474);">Browse</div>
<svg style="left:1006px;top:384px" width="18" height="18" viewBox="0 0 18 18"><circle cx="9" cy="9" r="9" fill="#c8cbf0"/><path d="M8 5V9.5L11 11.5" fill="none" stroke="#3a41c2" stroke-width="1.8" stroke-linecap="round"/></svg>
<div class="t" style="left:990.5px;top:412.00px;font-size:13px;color:#c8cbf0;font-weight:bold;font-family:'Liberation Sans',sans-serif;font-style:normal;transform:scaleX(0.9728);">Recents</div>
<svg style="left:1006px;top:446px" width="18" height="18" viewBox="0 0 18 18"><path d="M9 0.8L11.5 6L17.2 6.7L13 10.6L14.1 16.3L9 13.5L3.9 16.3L5 10.6L0.8 6.7L6.5 6Z" fill="#c8cbf0" stroke="#c8cbf0" stroke-width="1.2" stroke-linejoin="round"/></svg>
<div class="t" style="left:987.5px;top:473.00px;font-size:13px;color:#c8cbf0;font-weight:bold;font-family:'Liberation Sans',sans-serif;font-style:normal;transform:scaleX(0.9600);">Favorites</div>
<svg style="left:1006px;top:509px" width="18" height="13" viewBox="0 0 18 13"><circle cx="5" cy="3" r="3" fill="#c8cbf0"/><path d="M0 11Q0 7 5 7Q10 7 10 11V13H0Z" fill="#c8cbf0"/><rect x="10" y="2.5" width="8" height="3.5" rx="1.5" fill="#c8cbf0"/><rect x="10" y="8.5" width="7" height="4" rx="1.5" fill="#c8cbf0"/></svg>
<div class="t" style="left:987px;top:535.40px;font-size:13px;color:#c8cbf0;font-weight:bold;font-family:'Liberation Sans',sans-serif;font-style:normal;transform:scaleX(0.9485);">Resource</div>
<div class="t" style="left:974.7px;top:553.50px;font-size:13px;color:#c8cbf0;font-weight:bold;font-family:'Liberation Sans',sans-serif;font-style:normal;transform:scaleX(1.0168);">Management</div>
<svg style="left:1005px;top:588px" width="20" height="16" viewBox="0 0 20 16"><rect x="7.4" y="1.1" width="5.2" height="5.2" rx="1.6" fill="#c8cbf0" transform="rotate(45 10 3.7)"/><rect x="1.2999999999999998" y="5.4" width="5.2" height="5.2" rx="1.6" fill="#c8cbf0" transform="rotate(45 3.9 8)"/><rect x="13.500000000000002" y="5.4" width="5.2" height="5.2" rx="1.6" fill="#c8cbf0" transform="rotate(45 16.1 8)"/><rect x="7.4" y="9.700000000000001" width="5.2" height="5.2" rx="1.6" fill="#c8cbf0" transform="rotate(45 10 12.3)"/></svg>
<div class="t" style="left:983.5px;top:614.20px;font-size:13px;color:#c8cbf0;font-weight:bold;font-family:'Liberation Sans',sans-serif;font-style:normal;transform:scaleX(0.9758);">WorkApps</div>
<div class="abs" style="left:1000px;top:650px;width:30px;height:31px;background:#7d71d9;border-radius:50%"></div>
<svg style="left:1007px;top:658px" width="16" height="16" viewBox="0 0 16 16"><path d="M8 1V15M1 8H15" stroke="#fff" stroke-width="1.8"/></svg>
<div class="t" style="left:994.6px;top:688.00px;font-size:13px;color:#c8cbf0;font-weight:bold;font-family:'Liberation Sans',sans-serif;font-style:normal;transform:scaleX(1.0082);">Create</div>
<div class="abs" style="left:985px;top:725px;width:60px;height:2px;background:#8e84df;"></div>
<div class="abs" style="left:997px;top:747px;width:36px;height:35px;background:#8376dc;border-radius:8px;border:1.5px solid #9c92e6"></div>
<svg style="left:1005.5px;top:757px" width="18" height="15" viewBox="0 0 18 15"><path d="M2 0.5H6.5L8.5 2H16Q17.5 2 17.5 3.5V13Q17.5 14.5 16 14.5H2Q0.5 14.5 0.5 13V2Q0.5 0.5 2 0.5Z" fill="#fff"/><circle cx="6.8" cy="6.8" r="1.7" fill="#8376dc"/><circle cx="11.2" cy="6.8" r="1.7" fill="#8376dc"/><path d="M3.8 12Q4 9.3 6.8 9.3Q9.2 9.3 9.3 12Z M8.7 12Q8.9 9.3 11.2 9.3Q14 9.3 14.2 12Z" fill="#8376dc"/></svg>
<div class="t" style="left:981px;top:785.70px;font-size:13px;color:#c8cbf0;font-weight:bold;font-family:'Liberation Sans',sans-serif;font-style:normal;transform:scaleX(0.9792);">Workspace</div>
<svg style="left:1006px;top:899px" width="18" height="18" viewBox="0 0 18 18"><circle cx="2.5" cy="2.5" r="2.5" fill="#c8cbf0"/><circle cx="2.5" cy="9.0" r="2.5" fill="#c8cbf0"/><circle cx="2.5" cy="15.5" r="2.5" fill="#c8cbf0"/><circle cx="9.0" cy="2.5" r="2.5" fill="#c8cbf0"/><circle cx="9.0" cy="9.0" r="2.5" fill="#c8cbf0"/><circle cx="9.0" cy="15.5" r="2.5" fill="#c8cbf0"/><circle cx="15.5" cy="2.5" r="2.5" fill="#c8cbf0"/><circle cx="15.5" cy="9.0" r="2.5" fill="#c8cbf0"/><circle cx="15.5" cy="15.5" r="2.5" fill="#c8cbf0"/></svg>
<div class="abs" style="left:1006px;top:943px;width:18px;height:18px;background:#c8cbf0;border-radius:50%"></div>
<div class="t" style="left:1011.8px;top:946.69px;font-size:11px;color:#5a3fd0;font-weight:bold;font-family:'Liberation Sans',sans-serif;font-style:normal;">?</div>
<svg style="left:1006.7px;top:987px" width="17" height="18" viewBox="0 0 17 18"><circle cx="8.5" cy="4.6" r="4.4" fill="#c8cbf0"/><path d="M0 17Q0 10 8.5 10Q17 10 17 17Z" fill="#c8cbf0"/></svg>
</div>
<div class="abs" style="left:0px;top:1032px;width:1920px;height:48px;background:#1c1c1c;"></div>
<svg style="left:20px;top:1044px" width="24" height="22" viewBox="0 0 24 22"><defs><linearGradient id="sun" x1="0" y1="0" x2="0" y2="1"><stop offset="0" stop-color="#f9c23c"/><stop offset="1" stop-color="#f07b13"/></linearGradient></defs><circle cx="11" cy="11" r="10.5" fill="url(#sun)"/><path d="M9 17.5Q9 14 12.5 14Q14 11.5 17 12.5Q21 12.5 21.5 16Q23.5 17 22 18.5H10Q9 18.5 9 17.5Z" fill="#cfe3f7"/></svg>
<div class="abs" style="left:30px;top:1038px;width:16px;height:16px;background:#f4a1ac;border-radius:50%"></div>
<div class="t" style="left:35px;top:1041.19px;font-size:11px;color:#111;font-weight:normal;font-family:'Liberation Sans',sans-serif;font-style:normal;">1</div>
<div class="t" style="left:50.5px;top:1041.84px;font-size:12px;color:#ffffff;font-weight:normal;font-family:'Liberation Sans',sans-serif;font-style:normal;transform:scaleX(0.9300);">38°F</div>
<div class="t" style="left:50.5px;top:1057.84px;font-size:12px;color:#d6d6d6;font-weight:normal;font-family:'Liberation Sans',sans-serif;font-style:normal;transform:scaleX(1.0167);">Mostly sunny</div>
<svg style="left:661px;top:1045px" width="23" height="23" viewBox="0 0 23 23"><defs><linearGradient id="win" x1="0" y1="0" x2="1" y2="1"><stop offset="0" stop-color="#6ce0fb"/><stop offset="1" stop-color="#1596e8"/></linearGradient></defs><rect x="0" y="0" width="11" height="11" fill="url(#win)"/><rect x="12" y="0" width="11" height="11" fill="url(#win)"/><rect x="0" y="12" width="11" height="11" fill="url(#win)"/><rect x="12" y="12" width="11" height="11" fill="url(#win)"/></svg>
<div class="abs" style="left:697.5px;top:1040px;width:219px;height:32px;background:#383838;border-radius:16px;border:1px solid #454545"></div>
<svg style="left:709px;top:1050px" width="15" height="15" viewBox="0 0 15 15"><circle cx="6" cy="6" r="5.2" fill="none" stroke="#d8d8d8" stroke-width="1.5"/><path d="M9.8 9.8L14 14" stroke="#d8d8d8" stroke-width="1.6"/></svg>
<div class="t" style="left:734px;top:1049.65px;font-size:14px;color:#cfcfcf;font-weight:normal;font-family:'Liberation Sans',sans-serif;font-style:normal;transform:scaleX(0.9153);">Search</div>
<svg style="left:875px;top:1046px" width="26" height="22" viewBox="0 0 26 22"><g transform="skewY(-8) translate(0 3)"><rect x="1" y="0" width="25" height="17" fill="#f0f0f0"/><rect x="0" y="0.0" width="25" height="0.8" fill="#e04040"/><rect x="0" y="1.6" width="25" height="0.8" fill="#e04040"/><rect x="0" y="3.2" width="25" height="0.8" fill="#e04040"/><rect x="0" y="4.800000000000001" width="25" height="0.8" fill="#e04040"/><rect x="0" y="6.4" width="25" height="0.8" fill="#e04040"/><rect x="0" y="8.0" width="25" height="0.8" fill="#e04040"/><rect x="0" y="9.600000000000001" width="25" height="0.8" fill="#e04040"/><rect x="0" y="11.200000000000001" width="25" height="0.8" fill="#e04040"/><rect x="0" y="12.8" width="25" height="0.8" fill="#e04040"/><rect x="0" y="14.4" width="25" height="0.8" fill="#e04040"/><rect x="0" y="16.0" width="25" height="0.8" fill="#e04040"/><rect x="0" y="17.6" width="25" height="0.8" fill="#e04040"/><rect x="0" y="19.200000000000003" width="25" height="0.8" fill="#e04040"/><rect x="1" y="0" width="11" height="9" fill="#3a5aa8"/></g><rect x="0" y="1" width="1.3" height="21" fill="#bbb"/></svg>
<svg style="left:929px;top:1045px" width="24" height="22" viewBox="0 0 24 22"><rect x="0" y="7" width="14" height="14" rx="1" fill="#6e6e6e"/><rect x="8" y="0" width="15" height="15" rx="1" fill="#f2f2f2"/><rect x="5" y="6" width="9" height="9" fill="#b5b5b5"/></svg>
<svg style="left:972px;top:1044px" width="25" height="24" viewBox="0 0 25 24"><circle cx="16" cy="5" r="3.6" fill="#7b83eb"/><rect x="11" y="9" width="13" height="13" rx="4" fill="#7b83eb"/><circle cx="10" cy="6" r="4" fill="#5059c9"/><rect x="0" y="9" width="13" height="13" rx="2" fill="#4b53bc"/><text x="3" y="19" font-family="Liberation Sans" font-weight="bold" font-size="10" fill="#fff">T</text></svg>
<div class="abs" style="left:986px;top:1038px;width:17px;height:17px;background:#cf2f2a;border-radius:50%"></div>
<div class="t" style="left:991px;top:1040.84px;font-size:12px;color:#fff;font-weight:normal;font-family:'Liberation Sans',sans-serif;font-style:normal;">1</div>
<div class="abs" style="left:981.5px;top:1072px;width:7px;height:2.5px;background:#9a9a9a;border-radius:1.5px"></div>
<div class="abs" style="left:1009px;top:1036px;width:35px;height:40px;background:#2b2b2b;border-radius:5px;border:1px solid #3a3a3a"></div>
<div class="abs" style="left:1044px;top:1038px;width:3px;height:36px;background:#262626;border-radius:0 4px 4px 0"></div>
<svg style="left:1017px;top:1044px" width="24" height="24" viewBox="0 0 24 24"><defs><linearGradient id="e1" x1="0" y1="0" x2="0" y2="1"><stop offset="0" stop-color="#1e9be8"/><stop offset="1" stop-color="#1270cc"/></linearGradient><linearGradient id="e2" x1="0" y1="0" x2="1" y2="0.6"><stop offset="0" stop-color="#27bdf0"/><stop offset="0.55" stop-color="#33c6bb"/><stop offset="1" stop-color="#6fe34e"/></linearGradient></defs><circle cx="12" cy="12" r="11.8" fill="url(#e1)"/><path d="M0.3 11.5A11.8 11.8 0 0 1 23.8 12.5Q23.6 16.3 19.5 16.3H16Q13.8 16.3 14.6 13.8A3.8 3.8 0 0 0 8.2 9.6Q4.8 7.8 0.3 11.5Z" fill="url(#e2)"/><path d="M8.2 9.6Q6 13 7.6 17.5Q10 23 16 23Q20.5 22.5 21 18.2Q17.5 20.6 13.5 19.2Q9 17.2 9.4 12.8Q9.6 11 11 10.2Z" fill="#0f529f"/><circle cx="11.7" cy="13" r="3" fill="#2b2b2b"/></svg>
<div class="abs" style="left:1021px;top:1073px;width:15px;height:3px;background:#4cc2ff;border-radius:1.5px"></div>
<svg style="left:1060px;top:1044px" width="26" height="23" viewBox="0 0 26 23"><rect x="7" y="2" width="18" height="19" rx="2" fill="#28a8ea"/><path d="M7 11L16 17L25 11V21H7Z" fill="#0a64ad"/><rect x="0" y="5" width="14" height="14" rx="2" fill="#0f6cbd"/><text x="2.5" y="16.5" font-family="Liberation Sans" font-weight="bold" font-size="11" fill="#fff">O</text></svg>
<div class="abs" style="left:1069.5px;top:1072px;width:7px;height:2.5px;background:#9a9a9a;border-radius:1.5px"></div>
<svg style="left:1104px;top:1045px" width="25" height="22" viewBox="0 0 25 22"><path d="M0 2Q0 0 2 0H9L11 3H23Q25 3 25 5V20Q25 22 23 22H2Q0 22 0 20Z" fill="#e9a91f"/><rect x="0" y="6" width="25" height="16" rx="2" fill="#ffd45e"/><rect x="6" y="15" width="13" height="5" rx="1.5" fill="#1d8fe0"/></svg>
<div class="abs" style="left:1149px;top:1044px;width:24px;height:24px;background:#5865f2;border-radius:50%"></div>
<svg style="left:1153px;top:1050px" width="16" height="12" viewBox="0 0 16 12"><path d="M3 1Q6 0 7 1H9Q10 0 13 1Q16 5 16 10Q14 12 12 12L11 10Q8 11 5 10L4 12Q2 12 0 10Q0 5 3 1Z" fill="#fff"/><circle cx="5.5" cy="6.5" r="1.4" fill="#5865f2"/><circle cx="10.5" cy="6.5" r="1.4" fill="#5865f2"/></svg>
<svg style="left:1195px;top:1046px" width="20" height="20" viewBox="0 0 20 20"><defs><linearGradient id="gg" x1="0" y1="0" x2="0" y2="1"><stop offset="0" stop-color="#6b2fe0"/><stop offset="1" stop-color="#2a0a7a"/></linearGradient></defs><rect x="0" y="0" width="20" height="20" rx="4" fill="url(#gg)"/><path d="M13.5 6.5Q12 4.5 9.5 4.5Q5 4.5 5 10Q5 15 9.5 15Q12.5 15 13.5 12.5V10H10" fill="none" stroke="#f4e8ff" stroke-width="2.6"/><path d="M13.5 11L15 15.5" stroke="#e0c8ff" stroke-width="2"/><circle cx="3.5" cy="4" r="0.7" fill="#fff"/><circle cx="16.5" cy="4" r="0.9" fill="#fff"/><circle cx="3" cy="13" r="0.6" fill="#fff"/><circle cx="17" cy="9" r="0.6" fill="#fff"/></svg>
<div class="abs" style="left:1202px;top:1072px;width:6.5px;height:2.5px;background:#9a9a9a;border-radius:1.5px"></div>
<svg style="left:1236px;top:1045px" width="26" height="22" viewBox="0 0 26 22"><rect x="7" y="1" width="18" height="20" rx="1.5" fill="#0e8f92"/><path d="M7 2.5Q7 1 8.5 1H23.5Q25 1 25 2.5V11H7Z" fill="#2cc3c7"/><circle cx="20" cy="5.5" r="2.6" fill="#129da0"/><rect x="17.5" y="13.5" width="5" height="5" fill="#1aa9ab"/><rect x="0.5" y="5" width="12.5" height="12.5" rx="1.5" fill="#077d80"/><text x="3.3" y="15.3" font-family="Liberation Sans" font-weight="bold" font-size="10" fill="#fff">F</text></svg>
<div class="t" style="left:1832.5px;top:1041.84px;font-size:12px;color:#ffffff;font-weight:normal;font-family:'Liberation Sans',sans-serif;font-style:normal;transform:scaleX(1.0038);-webkit-text-stroke:0.25px #fff;">7:37 AM</div>
<div class="t" style="left:1821.5px;top:1058.14px;font-size:12px;color:#ffffff;font-weight:normal;font-family:'Liberation Sans',sans-serif;font-style:normal;transform:scaleX(1.0339);-webkit-text-stroke:0.25px #fff;">2/16/2026</div>
<svg style="left:1885px;top:1048px" width="15" height="17" viewBox="0 0 15 17"><path d="M6.5 2.5A5 5 0 0 1 11.5 7.5V10.5L13.5 13H0L2 10.5V7.5A5 5 0 0 1 6.5 2.5Z" fill="#fafafa"/><path d="M4.5 14H8.5A2 1.6 0 0 1 4.5 14Z" fill="#fafafa"/><path d="M4 6.5H8L4 10.5H8" fill="none" stroke="#1c1c1c" stroke-width="1.3"/><path d="M10 1H14L10 5H14" fill="none" stroke="#1c1c1c" stroke-width="2.6"/><path d="M10 1H14L10 5H14" fill="none" stroke="#fafafa" stroke-width="1.2"/></svg>
</body></html>
